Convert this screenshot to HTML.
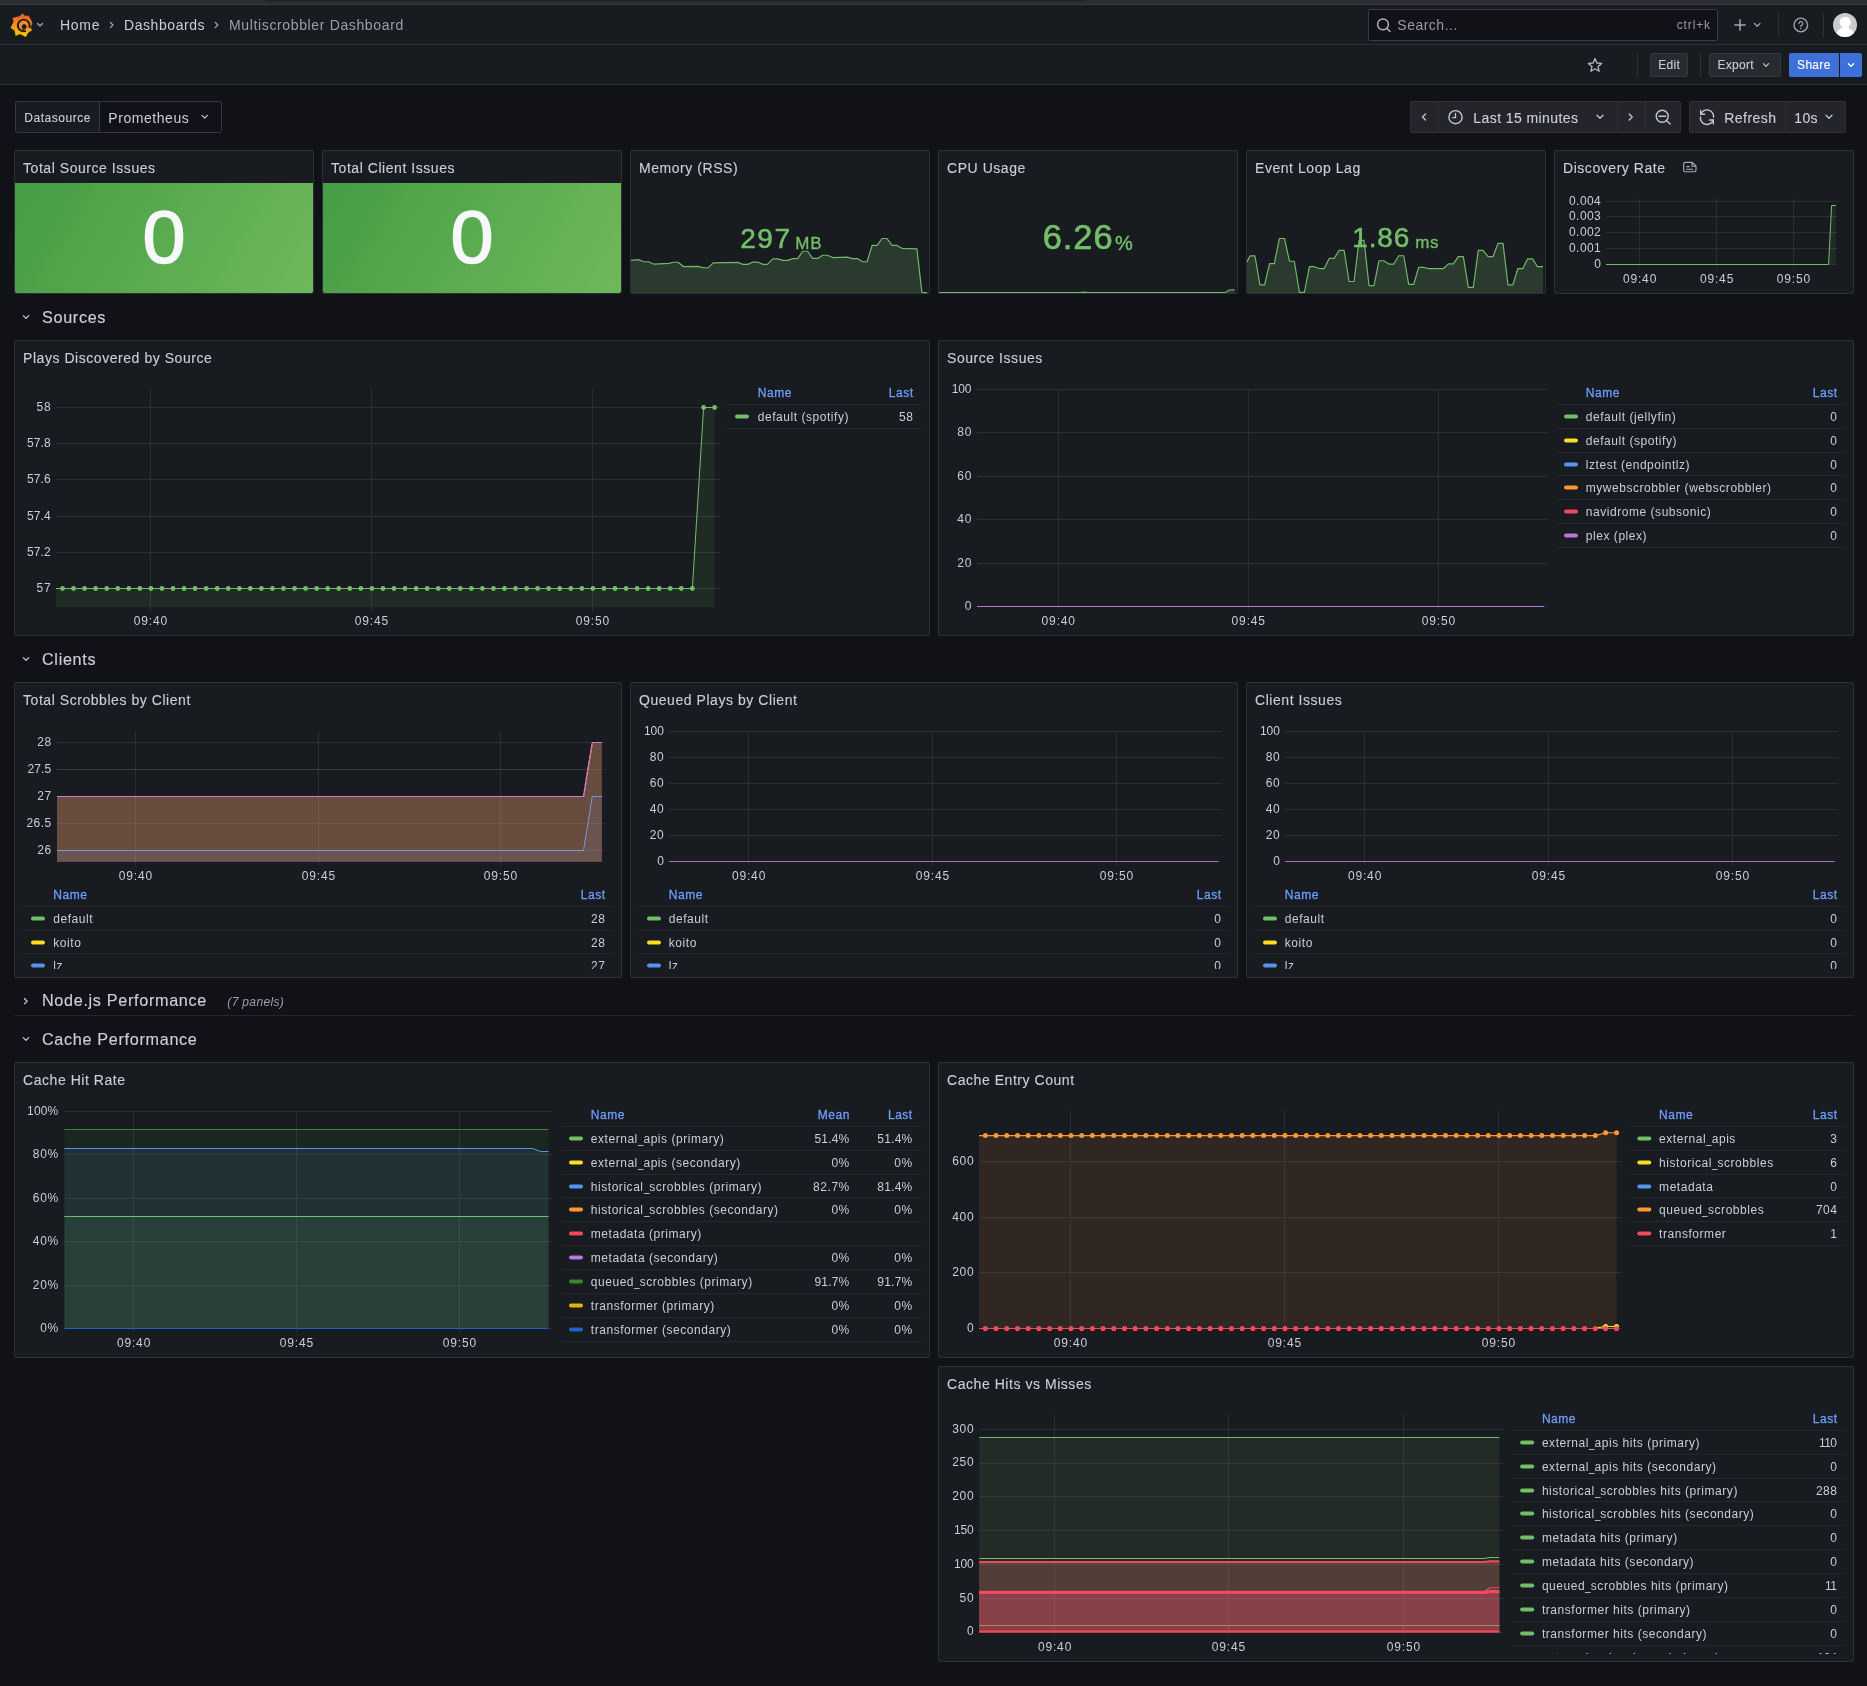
<!DOCTYPE html>
<html lang="en"><head><meta charset="utf-8"><title>Multiscrobbler Dashboard - Dashboards - Grafana</title>
<style>
html,body{margin:0;padding:0;background:#111217;}
body{width:1867px;height:1686px;position:relative;overflow:hidden;font-family:"Liberation Sans",sans-serif;}
.t{position:absolute;white-space:nowrap;}
.b{position:absolute;box-sizing:content-box;}
.u{display:inline-block;width:0.47em;transform:scaleX(0.82);transform-origin:0 50%;letter-spacing:0;}
svg.g{position:absolute;left:0;top:0;}
#txt{position:absolute;left:0;top:0;width:1867px;height:1686px;will-change:transform;}
</style></head><body>
<div class="b" style="left:0px;top:0px;width:1867px;height:4px;background:#2c2b31;"></div>
<div class="b" style="left:267px;top:0px;width:817px;height:1px;background:#202023;"></div>
<div class="b" style="left:0px;top:4px;width:1867px;height:1px;background:#3b3b40;"></div>
<div class="b" style="left:0px;top:5px;width:1867px;height:39px;background:#181b1f;"></div>
<div class="b" style="left:0px;top:44px;width:1867px;height:1px;background:#2d2f35;"></div>
<div class="b" style="left:0px;top:45px;width:1867px;height:39px;background:#181b1f;"></div>
<div class="b" style="left:0px;top:84px;width:1867px;height:1px;background:#2d2f35;"></div>
<div class="b" style="left:1368px;top:9px;width:348px;height:30px;background:#111217;border:1px solid #393b42;border-radius:2px;"></div>
<div class="b" style="left:1650px;top:53px;width:36px;height:22px;background:#292a30;border:1px solid #36383e;border-radius:2px;"></div>
<div class="b" style="left:1709px;top:53px;width:70px;height:22px;background:#292a30;border:1px solid #36383e;border-radius:2px;"></div>
<div class="b" style="left:1789px;top:53px;width:50px;height:24px;background:#3d71d9;border-radius:2px 0 0 2px;"></div>
<div class="b" style="left:1840px;top:53px;width:22px;height:24px;background:#3d71d9;border-radius:0 2px 2px 0;"></div>
<div class="b" style="left:15px;top:101px;width:205px;height:30px;background:#111217;border:1px solid #36373e;border-radius:2px;"></div>
<div class="b" style="left:15px;top:101px;width:83px;height:30px;background:#181b1f;border:1px solid #36373e;border-radius:2px 0 0 2px;"></div>
<div class="b" style="left:1410px;top:101px;width:269px;height:30px;background:#23252b;border:1px solid #2f3137;border-radius:2px;"></div>
<div class="b" style="left:1689px;top:101px;width:155px;height:30px;background:#23252b;border:1px solid #2f3137;border-radius:2px;"></div>
<div class="b" style="left:14px;top:150px;width:298px;height:142px;background:#181b1f;border:1px solid #2d2f35;border-radius:2px;"></div>
<div class="b" style="left:322px;top:150px;width:298px;height:142px;background:#181b1f;border:1px solid #2d2f35;border-radius:2px;"></div>
<div class="b" style="left:630px;top:150px;width:298px;height:142px;background:#181b1f;border:1px solid #2d2f35;border-radius:2px;"></div>
<div class="b" style="left:938px;top:150px;width:298px;height:142px;background:#181b1f;border:1px solid #2d2f35;border-radius:2px;"></div>
<div class="b" style="left:1246px;top:150px;width:298px;height:142px;background:#181b1f;border:1px solid #2d2f35;border-radius:2px;"></div>
<div class="b" style="left:1554px;top:150px;width:298px;height:142px;background:#181b1f;border:1px solid #2d2f35;border-radius:2px;"></div>
<div class="b" style="left:15px;top:183px;width:298px;height:110px;background:linear-gradient(120deg,#459d45,#70b85a);border-radius:0 0 2px 2px;"></div>
<div class="b" style="left:323px;top:183px;width:298px;height:110px;background:linear-gradient(120deg,#459d45,#70b85a);border-radius:0 0 2px 2px;"></div>
<div class="b" style="left:14px;top:340px;width:914px;height:294px;background:#181b1f;border:1px solid #2d2f35;border-radius:2px;"></div>
<div class="b" style="left:938px;top:340px;width:914px;height:294px;background:#181b1f;border:1px solid #2d2f35;border-radius:2px;"></div>
<div class="b" style="left:14px;top:682px;width:606px;height:294px;background:#181b1f;border:1px solid #2d2f35;border-radius:2px;"></div>
<div class="b" style="left:630px;top:682px;width:606px;height:294px;background:#181b1f;border:1px solid #2d2f35;border-radius:2px;"></div>
<div class="b" style="left:1246px;top:682px;width:606px;height:294px;background:#181b1f;border:1px solid #2d2f35;border-radius:2px;"></div>
<div class="b" style="left:14px;top:1062px;width:914px;height:294px;background:#181b1f;border:1px solid #2d2f35;border-radius:2px;"></div>
<div class="b" style="left:938px;top:1062px;width:914px;height:294px;background:#181b1f;border:1px solid #2d2f35;border-radius:2px;"></div>
<div class="b" style="left:938px;top:1366px;width:914px;height:294px;background:#181b1f;border:1px solid #2d2f35;border-radius:2px;"></div>
<svg class="g" width="1867" height="1686" viewBox="0 0 1867 1686">
<defs>
<linearGradient id="lg" x1="0" y1="0" x2="0" y2="1"><stop offset="0" stop-color="#f05a28"/><stop offset="1" stop-color="#fbca0a"/></linearGradient>
</defs>
<g transform="translate(21.6,25.3) scale(0.93) translate(-21.2,-25.1)">
<polygon points="22.20,12.60 24.60,15.10 28.90,15.30 30.10,18.10 31.70,20.60 32.20,23.20 31.70,25.00 30.90,25.60 30.70,28.40 32.20,30.20 27.90,33.10 25.50,37.30 19.60,34.30 14.90,36.00 13.90,30.70 9.60,27.70 12.80,21.60 11.90,17.30 19.00,15.60" fill="url(#lg)" stroke="url(#lg)" stroke-width="0.6" stroke-linejoin="round"/>
<circle cx="23.6" cy="25.4" r="5.4" fill="#f78d1e"/>
<circle cx="23.5" cy="25.3" r="6.3" fill="none" stroke="#181b1f" stroke-width="2.1" stroke-dasharray="2.6 4.6 32.38"/>
<circle cx="24.0" cy="26.7" r="2.6" fill="#181b1f"/>
<path d="M21.2 28.6 Q22.6 30.4 24.6 30.0" fill="none" stroke="#181b1f" stroke-width="0.9"/>
</g>
<polyline points="37.50,23.55 40.00,26.05 42.50,23.55" fill="none" stroke="#a3a4b2" stroke-width="1.3" stroke-linecap="round" stroke-linejoin="round"/>
<polyline points="110.40,22.40 113.00,25.00 110.40,27.60" fill="none" stroke="#a9aab8" stroke-width="1.2" stroke-linecap="round" stroke-linejoin="round"/>
<polyline points="215.20,22.40 217.80,25.00 215.20,27.60" fill="none" stroke="#a9aab8" stroke-width="1.2" stroke-linecap="round" stroke-linejoin="round"/>
<circle cx="1383" cy="24.4" r="5.4" fill="none" stroke="#b4b5c3" stroke-width="1.4"/>
<line x1="1387" y1="28.4" x2="1390" y2="31.4" stroke="#b4b5c3" stroke-width="1.4" stroke-linecap="round"/>
<path d="M1734.3 25 H1745.7 M1740 19.3 V30.7" stroke="#a3a4b2" stroke-width="1.5" fill="none"/>
<polyline points="1754.40,23.40 1757.20,26.20 1760.00,23.40" fill="none" stroke="#a3a4b2" stroke-width="1.3" stroke-linecap="round" stroke-linejoin="round"/>
<rect x="1778.00" y="13.00" width="1" height="24.00" fill="#2f3137"/>
<circle cx="1800.8" cy="25" r="6.8" fill="none" stroke="#a3a4b2" stroke-width="1.3"/>
<path d="M1799.0 23.4 a1.9 1.9 0 1 1 2.8 1.7 q-1 .5 -1 1.4" fill="none" stroke="#a3a4b2" stroke-width="1.2" stroke-linecap="round"/>
<circle cx="1800.8" cy="28.5" r="0.8" fill="#a3a4b2"/>
<rect x="1823.00" y="13.00" width="1" height="24.00" fill="#2f3137"/>
<clipPath id="av"><circle cx="1845" cy="25" r="12"/></clipPath>
<circle cx="1845" cy="25" r="12" fill="#cbcbcb"/>
<g clip-path="url(#av)"><circle cx="1845.2" cy="22.3" r="5.6" fill="#fff"/><ellipse cx="1845.2" cy="36.5" rx="9.2" ry="9.5" fill="#fff"/></g>
<polygon points="1595.00,58.60 1596.88,63.01 1601.66,63.44 1598.04,66.59 1599.11,71.26 1595.00,68.80 1590.89,71.26 1591.96,66.59 1588.34,63.44 1593.12,63.01" fill="none" stroke="#b4b5c3" stroke-width="1.3" stroke-linejoin="round"/>
<rect x="1637.00" y="53.00" width="1" height="24.00" fill="#2f3137"/>
<rect x="1700.00" y="53.00" width="1" height="24.00" fill="#2f3137"/>
<polyline points="1763.40,63.70 1766.00,66.30 1768.60,63.70" fill="none" stroke="#c3c4d2" stroke-width="1.2" stroke-linecap="round" stroke-linejoin="round"/>
<polyline points="1848.40,63.70 1851.00,66.30 1853.60,63.70" fill="none" stroke="#ffffff" stroke-width="1.3" stroke-linecap="round" stroke-linejoin="round"/>
<polyline points="202.00,115.45 204.70,118.15 207.40,115.45" fill="none" stroke="#c3c4d2" stroke-width="1.2" stroke-linecap="round" stroke-linejoin="round"/>
<rect x="1438.00" y="101.00" width="1" height="32.00" fill="#2f3137"/>
<rect x="1617.00" y="101.00" width="1" height="32.00" fill="#2f3137"/>
<rect x="1645.00" y="101.00" width="1" height="32.00" fill="#2f3137"/>
<polyline points="1425.50,114.00 1422.50,117.00 1425.50,120.00" fill="none" stroke="#c3c4d2" stroke-width="1.4" stroke-linecap="round" stroke-linejoin="round"/>
<circle cx="1455.5" cy="117.2" r="6.6" fill="none" stroke="#c3c4d2" stroke-width="1.4"/>
<path d="M1455.5 113.4 V117.6 H1452.6" fill="none" stroke="#c3c4d2" stroke-width="1.3" stroke-linecap="round"/>
<polyline points="1597.00,115.30 1600.00,118.30 1603.00,115.30" fill="none" stroke="#c3c4d2" stroke-width="1.3" stroke-linecap="round" stroke-linejoin="round"/>
<polyline points="1629.20,114.00 1632.20,117.00 1629.20,120.00" fill="none" stroke="#c3c4d2" stroke-width="1.4" stroke-linecap="round" stroke-linejoin="round"/>
<circle cx="1662.2" cy="116.2" r="6.0" fill="none" stroke="#c3c4d2" stroke-width="1.4"/>
<path d="M1658.9 116.3 H1665.5 M1666.7 120.8 L1670.1 124.0" fill="none" stroke="#c3c4d2" stroke-width="1.4" stroke-linecap="round"/>
<rect x="1785.00" y="101.00" width="1" height="32.00" fill="#2f3137"/>
<path d="M1700.9 114.3 A6.5 6.5 0 0 1 1713.5 117.2 M1713.1 120.0 A6.5 6.5 0 0 1 1700.5 117.0" fill="none" stroke="#c3c4d2" stroke-width="1.4" stroke-linecap="round"/>
<path d="M1700.7 110.4 V114.3 H1704.6 M1713.3 123.9 V120.0 H1709.4" fill="none" stroke="#c3c4d2" stroke-width="1.4" stroke-linecap="round" stroke-linejoin="round"/>
<polyline points="1826.00,115.30 1829.00,118.30 1832.00,115.30" fill="none" stroke="#c3c4d2" stroke-width="1.3" stroke-linecap="round" stroke-linejoin="round"/>
<polygon points="631.00,260.40 638.28,259.57 643.26,261.56 648.25,261.73 654.06,264.22 669.00,263.39 673.15,262.23 678.13,262.23 683.45,266.54 698.06,266.38 703.04,267.70 708.02,267.87 713.33,262.89 737.91,262.39 742.89,264.38 747.87,264.38 752.85,262.06 757.83,262.06 762.81,264.38 767.46,264.38 772.78,258.90 777.76,258.90 782.74,260.40 787.72,260.40 792.70,258.57 797.68,258.57 802.66,251.27 807.65,251.27 812.63,258.41 817.61,258.41 822.59,255.25 827.57,255.25 832.55,257.58 847.50,257.08 852.48,258.57 857.46,258.57 862.44,261.73 867.09,261.73 872.07,245.45 877.05,245.45 882.03,238.48 887.01,238.48 891.99,245.45 896.98,245.45 901.96,248.28 916.90,248.78 921.88,292.44 927.20,292.78 927.20,293.00 631.00,293.00" fill="#2a3a2e"/>
<polyline points="631.00,260.40 638.28,259.57 643.26,261.56 648.25,261.73 654.06,264.22 669.00,263.39 673.15,262.23 678.13,262.23 683.45,266.54 698.06,266.38 703.04,267.70 708.02,267.87 713.33,262.89 737.91,262.39 742.89,264.38 747.87,264.38 752.85,262.06 757.83,262.06 762.81,264.38 767.46,264.38 772.78,258.90 777.76,258.90 782.74,260.40 787.72,260.40 792.70,258.57 797.68,258.57 802.66,251.27 807.65,251.27 812.63,258.41 817.61,258.41 822.59,255.25 827.57,255.25 832.55,257.58 847.50,257.08 852.48,258.57 857.46,258.57 862.44,261.73 867.09,261.73 872.07,245.45 877.05,245.45 882.03,238.48 887.01,238.48 891.99,245.45 896.98,245.45 901.96,248.28 916.90,248.78 921.88,292.44 927.20,292.78" fill="none" stroke="#6fb866" stroke-width="1.2" stroke-linejoin="round"/>
<polygon points="939.00,292.50 1080.00,292.50 1084.00,292.20 1090.00,292.50 1225.00,292.50 1229.50,290.00 1234.50,289.80 1234.50,293.00 939.00,293.00" fill="#2a3a2e"/>
<polyline points="939.00,292.50 1080.00,292.50 1084.00,292.20 1090.00,292.50 1225.00,292.50 1229.50,290.00 1234.50,289.80" fill="none" stroke="#6fb866" stroke-width="1.2" stroke-linejoin="round"/>
<polygon points="1246.97,262.06 1249.96,255.92 1254.94,255.92 1259.92,284.81 1264.57,284.81 1269.56,263.55 1274.37,263.55 1279.35,238.48 1284.50,238.48 1289.48,261.23 1294.30,261.23 1299.44,292.44 1304.42,292.44 1309.41,266.71 1314.22,266.71 1319.37,268.53 1324.18,268.53 1329.16,258.41 1334.15,258.41 1339.13,250.44 1344.11,250.44 1349.09,281.49 1354.07,281.49 1359.05,240.47 1364.03,240.47 1369.01,285.64 1374.00,285.64 1378.98,260.73 1383.79,260.73 1388.94,264.05 1393.75,264.05 1398.74,255.75 1403.72,255.75 1408.70,284.47 1413.68,284.47 1418.66,267.37 1423.48,267.37 1428.46,268.53 1443.40,268.53 1448.38,263.89 1453.36,263.89 1458.34,256.58 1463.33,256.58 1468.31,287.46 1473.29,287.46 1478.27,250.44 1483.08,250.44 1488.07,256.58 1493.05,256.58 1498.03,243.30 1503.01,243.30 1507.99,284.97 1512.81,284.97 1517.79,268.70 1522.60,268.70 1527.58,258.90 1532.56,258.90 1537.55,266.71 1543.03,266.71 1543.03,293.00 1246.97,293.00" fill="#2a3a2e"/>
<polyline points="1246.97,262.06 1249.96,255.92 1254.94,255.92 1259.92,284.81 1264.57,284.81 1269.56,263.55 1274.37,263.55 1279.35,238.48 1284.50,238.48 1289.48,261.23 1294.30,261.23 1299.44,292.44 1304.42,292.44 1309.41,266.71 1314.22,266.71 1319.37,268.53 1324.18,268.53 1329.16,258.41 1334.15,258.41 1339.13,250.44 1344.11,250.44 1349.09,281.49 1354.07,281.49 1359.05,240.47 1364.03,240.47 1369.01,285.64 1374.00,285.64 1378.98,260.73 1383.79,260.73 1388.94,264.05 1393.75,264.05 1398.74,255.75 1403.72,255.75 1408.70,284.47 1413.68,284.47 1418.66,267.37 1423.48,267.37 1428.46,268.53 1443.40,268.53 1448.38,263.89 1453.36,263.89 1458.34,256.58 1463.33,256.58 1468.31,287.46 1473.29,287.46 1478.27,250.44 1483.08,250.44 1488.07,256.58 1493.05,256.58 1498.03,243.30 1503.01,243.30 1507.99,284.97 1512.81,284.97 1517.79,268.70 1522.60,268.70 1527.58,258.90 1532.56,258.90 1537.55,266.71 1543.03,266.71" fill="none" stroke="#6fb866" stroke-width="1.2" stroke-linejoin="round"/>
<path d="M1685.2 162.4 H1692.2 L1696.0 166.0 V170.2 Q1696.0 171.7 1694.5 171.7 H1685.2 Q1683.7 171.7 1683.7 170.2 V163.9 Q1683.7 162.4 1685.2 162.4 Z M1692.0 162.6 V166.2 H1695.8 M1686.2 166.6 H1689.6 M1686.2 169.2 H1693.2" fill="none" stroke="#a9aab8" stroke-width="1.15" stroke-linejoin="round"/>
<rect x="1606.00" y="201.00" width="231.60" height="1" fill="#2b2f33"/>
<rect x="1606.00" y="216.00" width="231.60" height="1" fill="#2b2f33"/>
<rect x="1606.00" y="232.00" width="231.60" height="1" fill="#2b2f33"/>
<rect x="1606.00" y="248.00" width="231.60" height="1" fill="#2b2f33"/>
<rect x="1606.00" y="264.00" width="231.60" height="1" fill="#2b2f33"/>
<rect x="1639.00" y="199.00" width="1" height="69.30" fill="#2b2f33"/>
<rect x="1716.00" y="199.00" width="1" height="69.30" fill="#2b2f33"/>
<rect x="1793.00" y="199.00" width="1" height="69.30" fill="#2b2f33"/>
<polygon points="1606.00,264.50 1828.60,264.50 1831.60,205.50 1836.00,205.50 1836.00,264.50 1606.00,264.50" fill="#73bf69" fill-opacity="0.1"/>
<polyline points="1606.00,264.50 1828.60,264.50 1831.60,205.50 1836.00,205.50" fill="none" stroke="#73bf69" stroke-width="1" stroke-linejoin="round"/>
<polyline points="23.30,315.65 26.00,318.35 28.70,315.65" fill="none" stroke="#c3c4d2" stroke-width="1.3" stroke-linecap="round" stroke-linejoin="round"/>
<polyline points="23.30,657.65 26.00,660.35 28.70,657.65" fill="none" stroke="#c3c4d2" stroke-width="1.3" stroke-linecap="round" stroke-linejoin="round"/>
<polyline points="24.45,998.50 27.15,1001.20 24.45,1003.90" fill="none" stroke="#c3c4d2" stroke-width="1.3" stroke-linecap="round" stroke-linejoin="round"/>
<rect x="14.00" y="1015.00" width="1840.00" height="1" fill="#25272d"/>
<polyline points="23.30,1037.65 26.00,1040.35 28.70,1037.65" fill="none" stroke="#c3c4d2" stroke-width="1.3" stroke-linecap="round" stroke-linejoin="round"/>
<rect x="56.00" y="407.00" width="663.70" height="1" fill="#2b2f33"/>
<rect x="56.00" y="443.00" width="663.70" height="1" fill="#2b2f33"/>
<rect x="56.00" y="479.00" width="663.70" height="1" fill="#2b2f33"/>
<rect x="56.00" y="516.00" width="663.70" height="1" fill="#2b2f33"/>
<rect x="56.00" y="552.00" width="663.70" height="1" fill="#2b2f33"/>
<rect x="56.00" y="588.00" width="663.70" height="1" fill="#2b2f33"/>
<rect x="150.00" y="389.30" width="1" height="221.70" fill="#2b2f33"/>
<rect x="371.00" y="389.30" width="1" height="221.70" fill="#2b2f33"/>
<rect x="592.00" y="389.30" width="1" height="221.70" fill="#2b2f33"/>
<polygon points="56.00,588.50 62.50,588.50 73.55,588.50 84.60,588.50 95.65,588.50 106.70,588.50 117.75,588.50 128.80,588.50 139.85,588.50 150.90,588.50 161.95,588.50 173.00,588.50 184.05,588.50 195.10,588.50 206.15,588.50 217.20,588.50 228.25,588.50 239.30,588.50 250.35,588.50 261.40,588.50 272.45,588.50 283.50,588.50 294.55,588.50 305.60,588.50 316.65,588.50 327.70,588.50 338.75,588.50 349.80,588.50 360.85,588.50 371.90,588.50 382.95,588.50 394.00,588.50 405.05,588.50 416.10,588.50 427.15,588.50 438.20,588.50 449.25,588.50 460.30,588.50 471.35,588.50 482.40,588.50 493.45,588.50 504.50,588.50 515.55,588.50 526.60,588.50 537.65,588.50 548.70,588.50 559.75,588.50 570.80,588.50 581.85,588.50 592.90,588.50 603.95,588.50 615.00,588.50 626.05,588.50 637.10,588.50 648.15,588.50 659.20,588.50 670.25,588.50 681.30,588.50 692.35,588.50 703.60,407.50 714.60,407.50 714.60,607.00 56.00,607.00" fill="#73bf69" fill-opacity="0.1"/>
<polyline points="56.00,588.50 62.50,588.50 73.55,588.50 84.60,588.50 95.65,588.50 106.70,588.50 117.75,588.50 128.80,588.50 139.85,588.50 150.90,588.50 161.95,588.50 173.00,588.50 184.05,588.50 195.10,588.50 206.15,588.50 217.20,588.50 228.25,588.50 239.30,588.50 250.35,588.50 261.40,588.50 272.45,588.50 283.50,588.50 294.55,588.50 305.60,588.50 316.65,588.50 327.70,588.50 338.75,588.50 349.80,588.50 360.85,588.50 371.90,588.50 382.95,588.50 394.00,588.50 405.05,588.50 416.10,588.50 427.15,588.50 438.20,588.50 449.25,588.50 460.30,588.50 471.35,588.50 482.40,588.50 493.45,588.50 504.50,588.50 515.55,588.50 526.60,588.50 537.65,588.50 548.70,588.50 559.75,588.50 570.80,588.50 581.85,588.50 592.90,588.50 603.95,588.50 615.00,588.50 626.05,588.50 637.10,588.50 648.15,588.50 659.20,588.50 670.25,588.50 681.30,588.50 692.35,588.50 703.60,407.50 714.60,407.50" fill="none" stroke="#73bf69" stroke-width="1" stroke-linejoin="round"/>
<circle cx="62.50" cy="588.50" r="2.4" fill="#73bf69"/>
<circle cx="73.55" cy="588.50" r="2.4" fill="#73bf69"/>
<circle cx="84.60" cy="588.50" r="2.4" fill="#73bf69"/>
<circle cx="95.65" cy="588.50" r="2.4" fill="#73bf69"/>
<circle cx="106.70" cy="588.50" r="2.4" fill="#73bf69"/>
<circle cx="117.75" cy="588.50" r="2.4" fill="#73bf69"/>
<circle cx="128.80" cy="588.50" r="2.4" fill="#73bf69"/>
<circle cx="139.85" cy="588.50" r="2.4" fill="#73bf69"/>
<circle cx="150.90" cy="588.50" r="2.4" fill="#73bf69"/>
<circle cx="161.95" cy="588.50" r="2.4" fill="#73bf69"/>
<circle cx="173.00" cy="588.50" r="2.4" fill="#73bf69"/>
<circle cx="184.05" cy="588.50" r="2.4" fill="#73bf69"/>
<circle cx="195.10" cy="588.50" r="2.4" fill="#73bf69"/>
<circle cx="206.15" cy="588.50" r="2.4" fill="#73bf69"/>
<circle cx="217.20" cy="588.50" r="2.4" fill="#73bf69"/>
<circle cx="228.25" cy="588.50" r="2.4" fill="#73bf69"/>
<circle cx="239.30" cy="588.50" r="2.4" fill="#73bf69"/>
<circle cx="250.35" cy="588.50" r="2.4" fill="#73bf69"/>
<circle cx="261.40" cy="588.50" r="2.4" fill="#73bf69"/>
<circle cx="272.45" cy="588.50" r="2.4" fill="#73bf69"/>
<circle cx="283.50" cy="588.50" r="2.4" fill="#73bf69"/>
<circle cx="294.55" cy="588.50" r="2.4" fill="#73bf69"/>
<circle cx="305.60" cy="588.50" r="2.4" fill="#73bf69"/>
<circle cx="316.65" cy="588.50" r="2.4" fill="#73bf69"/>
<circle cx="327.70" cy="588.50" r="2.4" fill="#73bf69"/>
<circle cx="338.75" cy="588.50" r="2.4" fill="#73bf69"/>
<circle cx="349.80" cy="588.50" r="2.4" fill="#73bf69"/>
<circle cx="360.85" cy="588.50" r="2.4" fill="#73bf69"/>
<circle cx="371.90" cy="588.50" r="2.4" fill="#73bf69"/>
<circle cx="382.95" cy="588.50" r="2.4" fill="#73bf69"/>
<circle cx="394.00" cy="588.50" r="2.4" fill="#73bf69"/>
<circle cx="405.05" cy="588.50" r="2.4" fill="#73bf69"/>
<circle cx="416.10" cy="588.50" r="2.4" fill="#73bf69"/>
<circle cx="427.15" cy="588.50" r="2.4" fill="#73bf69"/>
<circle cx="438.20" cy="588.50" r="2.4" fill="#73bf69"/>
<circle cx="449.25" cy="588.50" r="2.4" fill="#73bf69"/>
<circle cx="460.30" cy="588.50" r="2.4" fill="#73bf69"/>
<circle cx="471.35" cy="588.50" r="2.4" fill="#73bf69"/>
<circle cx="482.40" cy="588.50" r="2.4" fill="#73bf69"/>
<circle cx="493.45" cy="588.50" r="2.4" fill="#73bf69"/>
<circle cx="504.50" cy="588.50" r="2.4" fill="#73bf69"/>
<circle cx="515.55" cy="588.50" r="2.4" fill="#73bf69"/>
<circle cx="526.60" cy="588.50" r="2.4" fill="#73bf69"/>
<circle cx="537.65" cy="588.50" r="2.4" fill="#73bf69"/>
<circle cx="548.70" cy="588.50" r="2.4" fill="#73bf69"/>
<circle cx="559.75" cy="588.50" r="2.4" fill="#73bf69"/>
<circle cx="570.80" cy="588.50" r="2.4" fill="#73bf69"/>
<circle cx="581.85" cy="588.50" r="2.4" fill="#73bf69"/>
<circle cx="592.90" cy="588.50" r="2.4" fill="#73bf69"/>
<circle cx="603.95" cy="588.50" r="2.4" fill="#73bf69"/>
<circle cx="615.00" cy="588.50" r="2.4" fill="#73bf69"/>
<circle cx="626.05" cy="588.50" r="2.4" fill="#73bf69"/>
<circle cx="637.10" cy="588.50" r="2.4" fill="#73bf69"/>
<circle cx="648.15" cy="588.50" r="2.4" fill="#73bf69"/>
<circle cx="659.20" cy="588.50" r="2.4" fill="#73bf69"/>
<circle cx="670.25" cy="588.50" r="2.4" fill="#73bf69"/>
<circle cx="681.30" cy="588.50" r="2.4" fill="#73bf69"/>
<circle cx="692.35" cy="588.50" r="2.4" fill="#73bf69"/>
<circle cx="703.60" cy="407.50" r="2.4" fill="#73bf69"/>
<circle cx="714.60" cy="407.50" r="2.4" fill="#73bf69"/>
<rect x="727.00" y="404.00" width="194.00" height="1" fill="#25282d"/>
<rect x="735.00" y="414.45" width="14" height="4" rx="2" fill="#73bf69"/>
<rect x="727.00" y="428.00" width="194.00" height="1" fill="#25282d"/>
<rect x="977.00" y="389.00" width="570.70" height="1" fill="#2b2f33"/>
<rect x="977.00" y="432.00" width="570.70" height="1" fill="#2b2f33"/>
<rect x="977.00" y="476.00" width="570.70" height="1" fill="#2b2f33"/>
<rect x="977.00" y="519.00" width="570.70" height="1" fill="#2b2f33"/>
<rect x="977.00" y="563.00" width="570.70" height="1" fill="#2b2f33"/>
<rect x="977.00" y="606.00" width="570.70" height="1" fill="#2b2f33"/>
<rect x="1058.00" y="389.20" width="1" height="221.00" fill="#2b2f33"/>
<rect x="1248.00" y="389.20" width="1" height="221.00" fill="#2b2f33"/>
<rect x="1438.00" y="389.20" width="1" height="221.00" fill="#2b2f33"/>
<rect x="977.00" y="606.00" width="566.80" height="1.0001" fill="#b877d9"/>
<rect x="1556.00" y="404.00" width="289.00" height="1" fill="#25282d"/>
<rect x="1564.00" y="414.45" width="14" height="4" rx="2" fill="#73bf69"/>
<rect x="1556.00" y="428.00" width="289.00" height="1" fill="#25282d"/>
<rect x="1564.00" y="438.45" width="14" height="4" rx="2" fill="#fade2a"/>
<rect x="1556.00" y="452.00" width="289.00" height="1" fill="#25282d"/>
<rect x="1564.00" y="462.45" width="14" height="4" rx="2" fill="#5794f2"/>
<rect x="1556.00" y="475.00" width="289.00" height="1" fill="#25282d"/>
<rect x="1564.00" y="485.45" width="14" height="4" rx="2" fill="#ff9830"/>
<rect x="1556.00" y="499.00" width="289.00" height="1" fill="#25282d"/>
<rect x="1564.00" y="509.45" width="14" height="4" rx="2" fill="#f2495c"/>
<rect x="1556.00" y="523.00" width="289.00" height="1" fill="#25282d"/>
<rect x="1564.00" y="533.45" width="14" height="4" rx="2" fill="#b877d9"/>
<rect x="1556.00" y="547.00" width="289.00" height="1" fill="#25282d"/>
<rect x="57.00" y="742.00" width="548.40" height="1" fill="#2b2f33"/>
<rect x="57.00" y="769.00" width="548.40" height="1" fill="#2b2f33"/>
<rect x="57.00" y="796.00" width="548.40" height="1" fill="#2b2f33"/>
<rect x="57.00" y="823.00" width="548.40" height="1" fill="#2b2f33"/>
<rect x="57.00" y="850.00" width="548.40" height="1" fill="#2b2f33"/>
<rect x="135.00" y="731.20" width="1" height="134.60" fill="#2b2f33"/>
<rect x="318.00" y="731.20" width="1" height="134.60" fill="#2b2f33"/>
<rect x="500.00" y="731.20" width="1" height="134.60" fill="#2b2f33"/>
<polygon points="57.00,796.50 583.50,796.50 592.30,742.50 601.80,742.50 601.80,861.80 57.00,861.80" fill="#684d3f"/>
<polygon points="57.00,850.50 583.50,850.50 592.30,796.50 601.80,796.50 601.80,861.80 57.00,861.80" fill="#6b534e"/>
<rect x="57.00" y="769.00" width="544.80" height="1" fill="#ffffff" fill-opacity="0.07"/>
<rect x="57.00" y="823.00" width="544.80" height="1" fill="#ffffff" fill-opacity="0.07"/>
<rect x="57.00" y="850.00" width="544.80" height="1" fill="#ffffff" fill-opacity="0.07"/>
<rect x="135.00" y="796.50" width="1" height="65.30" fill="#ffffff" fill-opacity="0.07"/>
<rect x="318.00" y="796.50" width="1" height="65.30" fill="#ffffff" fill-opacity="0.07"/>
<rect x="500.00" y="796.50" width="1" height="65.30" fill="#ffffff" fill-opacity="0.07"/>
<polyline points="57.00,850.50 583.50,850.50 592.30,796.50 601.80,796.50" fill="none" stroke="#7b93e0" stroke-width="1" stroke-linejoin="round"/>
<polyline points="583.50,796.50 592.30,742.50" fill="none" stroke="#e27a86" stroke-width="1.3" stroke-linejoin="round"/>
<polyline points="583.50,796.50 592.30,742.50" fill="none" stroke="#c77dd6" stroke-width="1.3" stroke-linejoin="round" stroke-dasharray="3 2.5"/>
<polyline points="57.00,796.50 583.50,796.50" fill="none" stroke="#c77dd6" stroke-width="1" stroke-linejoin="round"/>
<polyline points="592.30,742.50 601.80,742.50" fill="none" stroke="#c77dd6" stroke-width="1" stroke-linejoin="round"/>
<rect x="23.00" y="906.00" width="590.00" height="1" fill="#25282d"/>
<rect x="31.00" y="916.45" width="14" height="4" rx="2" fill="#73bf69"/>
<rect x="23.00" y="930.00" width="590.00" height="1" fill="#25282d"/>
<rect x="31.00" y="940.45" width="14" height="4" rx="2" fill="#fade2a"/>
<rect x="23.00" y="953.00" width="590.00" height="1" fill="#25282d"/>
<rect x="31.00" y="963.45" width="14" height="4" rx="2" fill="#5794f2"/>
<rect x="669.00" y="731.00" width="552.60" height="1" fill="#2b2f33"/>
<rect x="669.00" y="757.00" width="552.60" height="1" fill="#2b2f33"/>
<rect x="669.00" y="783.00" width="552.60" height="1" fill="#2b2f33"/>
<rect x="669.00" y="809.00" width="552.60" height="1" fill="#2b2f33"/>
<rect x="669.00" y="835.00" width="552.60" height="1" fill="#2b2f33"/>
<rect x="669.00" y="861.00" width="552.60" height="1" fill="#2b2f33"/>
<rect x="748.00" y="730.90" width="1" height="134.30" fill="#2b2f33"/>
<rect x="932.00" y="730.90" width="1" height="134.30" fill="#2b2f33"/>
<rect x="1116.00" y="730.90" width="1" height="134.30" fill="#2b2f33"/>
<rect x="669.00" y="861.00" width="549.20" height="1.0001" fill="#a672c8"/>
<rect x="639.00" y="906.00" width="590.00" height="1" fill="#25282d"/>
<rect x="647.00" y="916.45" width="14" height="4" rx="2" fill="#73bf69"/>
<rect x="639.00" y="930.00" width="590.00" height="1" fill="#25282d"/>
<rect x="647.00" y="940.45" width="14" height="4" rx="2" fill="#fade2a"/>
<rect x="639.00" y="953.00" width="590.00" height="1" fill="#25282d"/>
<rect x="647.00" y="963.45" width="14" height="4" rx="2" fill="#5794f2"/>
<rect x="1285.00" y="731.00" width="552.60" height="1" fill="#2b2f33"/>
<rect x="1285.00" y="757.00" width="552.60" height="1" fill="#2b2f33"/>
<rect x="1285.00" y="783.00" width="552.60" height="1" fill="#2b2f33"/>
<rect x="1285.00" y="809.00" width="552.60" height="1" fill="#2b2f33"/>
<rect x="1285.00" y="835.00" width="552.60" height="1" fill="#2b2f33"/>
<rect x="1285.00" y="861.00" width="552.60" height="1" fill="#2b2f33"/>
<rect x="1364.00" y="730.90" width="1" height="134.30" fill="#2b2f33"/>
<rect x="1548.00" y="730.90" width="1" height="134.30" fill="#2b2f33"/>
<rect x="1732.00" y="730.90" width="1" height="134.30" fill="#2b2f33"/>
<rect x="1285.00" y="861.00" width="549.20" height="1.0001" fill="#a672c8"/>
<rect x="1255.00" y="906.00" width="590.00" height="1" fill="#25282d"/>
<rect x="1263.00" y="916.45" width="14" height="4" rx="2" fill="#73bf69"/>
<rect x="1255.00" y="930.00" width="590.00" height="1" fill="#25282d"/>
<rect x="1263.00" y="940.45" width="14" height="4" rx="2" fill="#fade2a"/>
<rect x="1255.00" y="953.00" width="590.00" height="1" fill="#25282d"/>
<rect x="1263.00" y="963.45" width="14" height="4" rx="2" fill="#5794f2"/>
<rect x="64.30" y="1111.00" width="488.00" height="1" fill="#2b2f33"/>
<rect x="64.30" y="1154.00" width="488.00" height="1" fill="#2b2f33"/>
<rect x="64.30" y="1198.00" width="488.00" height="1" fill="#2b2f33"/>
<rect x="64.30" y="1241.00" width="488.00" height="1" fill="#2b2f33"/>
<rect x="64.30" y="1285.00" width="488.00" height="1" fill="#2b2f33"/>
<rect x="64.30" y="1328.00" width="488.00" height="1" fill="#2b2f33"/>
<rect x="133.00" y="1111.20" width="1" height="221.20" fill="#2b2f33"/>
<rect x="296.00" y="1111.20" width="1" height="221.20" fill="#2b2f33"/>
<rect x="459.00" y="1111.20" width="1" height="221.20" fill="#2b2f33"/>
<polygon points="64.30,1129.50 548.60,1129.50 548.60,1328.40 64.30,1328.40" fill="#37872d" fill-opacity="0.1"/>
<polygon points="64.30,1148.50 532.80,1148.50 540.50,1151.50 548.60,1151.50 548.60,1328.40 64.30,1328.40" fill="#5794f2" fill-opacity="0.1"/>
<polygon points="64.30,1216.50 548.60,1216.50 548.60,1328.40 64.30,1328.40" fill="#73bf69" fill-opacity="0.1"/>
<polyline points="64.30,1129.50 548.60,1129.50" fill="none" stroke="#37872d" stroke-width="1" stroke-linejoin="round"/>
<polyline points="64.30,1148.50 532.80,1148.50 540.50,1151.50 548.60,1151.50" fill="none" stroke="#5794f2" stroke-width="1" stroke-linejoin="round"/>
<polyline points="64.30,1216.50 548.60,1216.50" fill="none" stroke="#73bf69" stroke-width="1" stroke-linejoin="round"/>
<polyline points="64.30,1328.50 548.60,1328.50" fill="none" stroke="#1f60c4" stroke-width="1.2" stroke-linejoin="round"/>
<rect x="561.00" y="1126.00" width="360.00" height="1" fill="#25282d"/>
<rect x="569.00" y="1136.45" width="14" height="4" rx="2" fill="#73bf69"/>
<rect x="561.00" y="1150.00" width="360.00" height="1" fill="#25282d"/>
<rect x="569.00" y="1160.45" width="14" height="4" rx="2" fill="#fade2a"/>
<rect x="561.00" y="1174.00" width="360.00" height="1" fill="#25282d"/>
<rect x="569.00" y="1184.45" width="14" height="4" rx="2" fill="#5794f2"/>
<rect x="561.00" y="1197.00" width="360.00" height="1" fill="#25282d"/>
<rect x="569.00" y="1207.45" width="14" height="4" rx="2" fill="#ff9830"/>
<rect x="561.00" y="1221.00" width="360.00" height="1" fill="#25282d"/>
<rect x="569.00" y="1231.45" width="14" height="4" rx="2" fill="#f2495c"/>
<rect x="561.00" y="1245.00" width="360.00" height="1" fill="#25282d"/>
<rect x="569.00" y="1255.45" width="14" height="4" rx="2" fill="#b877d9"/>
<rect x="561.00" y="1269.00" width="360.00" height="1" fill="#25282d"/>
<rect x="569.00" y="1279.45" width="14" height="4" rx="2" fill="#37872d"/>
<rect x="561.00" y="1293.00" width="360.00" height="1" fill="#25282d"/>
<rect x="569.00" y="1303.45" width="14" height="4" rx="2" fill="#e0b400"/>
<rect x="561.00" y="1317.00" width="360.00" height="1" fill="#25282d"/>
<rect x="569.00" y="1327.45" width="14" height="4" rx="2" fill="#1f60c4"/>
<rect x="561.00" y="1341.00" width="360.00" height="1" fill="#25282d"/>
<rect x="979.10" y="1161.00" width="642.50" height="1" fill="#2b2f33"/>
<rect x="979.10" y="1217.00" width="642.50" height="1" fill="#2b2f33"/>
<rect x="979.10" y="1272.00" width="642.50" height="1" fill="#2b2f33"/>
<rect x="979.10" y="1328.00" width="642.50" height="1" fill="#2b2f33"/>
<rect x="1070.00" y="1110.90" width="1" height="221.20" fill="#2b2f33"/>
<rect x="1284.00" y="1110.90" width="1" height="221.20" fill="#2b2f33"/>
<rect x="1498.00" y="1110.90" width="1" height="221.20" fill="#2b2f33"/>
<polygon points="979.10,1135.60 985.40,1135.60 996.10,1135.60 1006.80,1135.60 1017.50,1135.60 1028.20,1135.60 1038.90,1135.60 1049.60,1135.60 1060.30,1135.60 1071.00,1135.60 1081.70,1135.60 1092.40,1135.60 1103.10,1135.60 1113.80,1135.60 1124.50,1135.60 1135.20,1135.60 1145.90,1135.60 1156.60,1135.60 1167.30,1135.60 1178.00,1135.60 1188.70,1135.60 1199.40,1135.60 1210.10,1135.60 1220.80,1135.60 1231.50,1135.60 1242.20,1135.60 1252.90,1135.60 1263.60,1135.60 1274.30,1135.60 1285.00,1135.60 1295.70,1135.60 1306.40,1135.60 1317.10,1135.60 1327.80,1135.60 1338.50,1135.60 1349.20,1135.60 1359.90,1135.60 1370.60,1135.60 1381.30,1135.60 1392.00,1135.60 1402.70,1135.60 1413.40,1135.60 1424.10,1135.60 1434.80,1135.60 1445.50,1135.60 1456.20,1135.60 1466.90,1135.60 1477.60,1135.60 1488.30,1135.60 1499.00,1135.60 1509.70,1135.60 1520.40,1135.60 1531.10,1135.60 1541.80,1135.60 1552.50,1135.60 1563.20,1135.60 1573.90,1135.60 1584.60,1135.60 1595.30,1135.60 1605.60,1132.70 1616.60,1132.70 1616.60,1328.10 979.10,1328.10" fill="#302723"/>
<rect x="979.10" y="1161.00" width="637.50" height="1" fill="#3e3733"/>
<rect x="979.10" y="1217.00" width="637.50" height="1" fill="#3e3733"/>
<rect x="979.10" y="1272.00" width="637.50" height="1" fill="#3e3733"/>
<rect x="1070.00" y="1135.60" width="1" height="192.50" fill="#3e3733"/>
<rect x="1284.00" y="1135.60" width="1" height="192.50" fill="#3e3733"/>
<rect x="1498.00" y="1135.60" width="1" height="192.50" fill="#3e3733"/>
<polyline points="979.10,1135.60 985.40,1135.60 996.10,1135.60 1006.80,1135.60 1017.50,1135.60 1028.20,1135.60 1038.90,1135.60 1049.60,1135.60 1060.30,1135.60 1071.00,1135.60 1081.70,1135.60 1092.40,1135.60 1103.10,1135.60 1113.80,1135.60 1124.50,1135.60 1135.20,1135.60 1145.90,1135.60 1156.60,1135.60 1167.30,1135.60 1178.00,1135.60 1188.70,1135.60 1199.40,1135.60 1210.10,1135.60 1220.80,1135.60 1231.50,1135.60 1242.20,1135.60 1252.90,1135.60 1263.60,1135.60 1274.30,1135.60 1285.00,1135.60 1295.70,1135.60 1306.40,1135.60 1317.10,1135.60 1327.80,1135.60 1338.50,1135.60 1349.20,1135.60 1359.90,1135.60 1370.60,1135.60 1381.30,1135.60 1392.00,1135.60 1402.70,1135.60 1413.40,1135.60 1424.10,1135.60 1434.80,1135.60 1445.50,1135.60 1456.20,1135.60 1466.90,1135.60 1477.60,1135.60 1488.30,1135.60 1499.00,1135.60 1509.70,1135.60 1520.40,1135.60 1531.10,1135.60 1541.80,1135.60 1552.50,1135.60 1563.20,1135.60 1573.90,1135.60 1584.60,1135.60 1595.30,1135.60 1605.60,1132.70 1616.60,1132.70" fill="none" stroke="#ff9830" stroke-width="1.1" stroke-linejoin="round"/>
<circle cx="985.40" cy="1135.60" r="2.5" fill="#ff9830"/>
<circle cx="996.10" cy="1135.60" r="2.5" fill="#ff9830"/>
<circle cx="1006.80" cy="1135.60" r="2.5" fill="#ff9830"/>
<circle cx="1017.50" cy="1135.60" r="2.5" fill="#ff9830"/>
<circle cx="1028.20" cy="1135.60" r="2.5" fill="#ff9830"/>
<circle cx="1038.90" cy="1135.60" r="2.5" fill="#ff9830"/>
<circle cx="1049.60" cy="1135.60" r="2.5" fill="#ff9830"/>
<circle cx="1060.30" cy="1135.60" r="2.5" fill="#ff9830"/>
<circle cx="1071.00" cy="1135.60" r="2.5" fill="#ff9830"/>
<circle cx="1081.70" cy="1135.60" r="2.5" fill="#ff9830"/>
<circle cx="1092.40" cy="1135.60" r="2.5" fill="#ff9830"/>
<circle cx="1103.10" cy="1135.60" r="2.5" fill="#ff9830"/>
<circle cx="1113.80" cy="1135.60" r="2.5" fill="#ff9830"/>
<circle cx="1124.50" cy="1135.60" r="2.5" fill="#ff9830"/>
<circle cx="1135.20" cy="1135.60" r="2.5" fill="#ff9830"/>
<circle cx="1145.90" cy="1135.60" r="2.5" fill="#ff9830"/>
<circle cx="1156.60" cy="1135.60" r="2.5" fill="#ff9830"/>
<circle cx="1167.30" cy="1135.60" r="2.5" fill="#ff9830"/>
<circle cx="1178.00" cy="1135.60" r="2.5" fill="#ff9830"/>
<circle cx="1188.70" cy="1135.60" r="2.5" fill="#ff9830"/>
<circle cx="1199.40" cy="1135.60" r="2.5" fill="#ff9830"/>
<circle cx="1210.10" cy="1135.60" r="2.5" fill="#ff9830"/>
<circle cx="1220.80" cy="1135.60" r="2.5" fill="#ff9830"/>
<circle cx="1231.50" cy="1135.60" r="2.5" fill="#ff9830"/>
<circle cx="1242.20" cy="1135.60" r="2.5" fill="#ff9830"/>
<circle cx="1252.90" cy="1135.60" r="2.5" fill="#ff9830"/>
<circle cx="1263.60" cy="1135.60" r="2.5" fill="#ff9830"/>
<circle cx="1274.30" cy="1135.60" r="2.5" fill="#ff9830"/>
<circle cx="1285.00" cy="1135.60" r="2.5" fill="#ff9830"/>
<circle cx="1295.70" cy="1135.60" r="2.5" fill="#ff9830"/>
<circle cx="1306.40" cy="1135.60" r="2.5" fill="#ff9830"/>
<circle cx="1317.10" cy="1135.60" r="2.5" fill="#ff9830"/>
<circle cx="1327.80" cy="1135.60" r="2.5" fill="#ff9830"/>
<circle cx="1338.50" cy="1135.60" r="2.5" fill="#ff9830"/>
<circle cx="1349.20" cy="1135.60" r="2.5" fill="#ff9830"/>
<circle cx="1359.90" cy="1135.60" r="2.5" fill="#ff9830"/>
<circle cx="1370.60" cy="1135.60" r="2.5" fill="#ff9830"/>
<circle cx="1381.30" cy="1135.60" r="2.5" fill="#ff9830"/>
<circle cx="1392.00" cy="1135.60" r="2.5" fill="#ff9830"/>
<circle cx="1402.70" cy="1135.60" r="2.5" fill="#ff9830"/>
<circle cx="1413.40" cy="1135.60" r="2.5" fill="#ff9830"/>
<circle cx="1424.10" cy="1135.60" r="2.5" fill="#ff9830"/>
<circle cx="1434.80" cy="1135.60" r="2.5" fill="#ff9830"/>
<circle cx="1445.50" cy="1135.60" r="2.5" fill="#ff9830"/>
<circle cx="1456.20" cy="1135.60" r="2.5" fill="#ff9830"/>
<circle cx="1466.90" cy="1135.60" r="2.5" fill="#ff9830"/>
<circle cx="1477.60" cy="1135.60" r="2.5" fill="#ff9830"/>
<circle cx="1488.30" cy="1135.60" r="2.5" fill="#ff9830"/>
<circle cx="1499.00" cy="1135.60" r="2.5" fill="#ff9830"/>
<circle cx="1509.70" cy="1135.60" r="2.5" fill="#ff9830"/>
<circle cx="1520.40" cy="1135.60" r="2.5" fill="#ff9830"/>
<circle cx="1531.10" cy="1135.60" r="2.5" fill="#ff9830"/>
<circle cx="1541.80" cy="1135.60" r="2.5" fill="#ff9830"/>
<circle cx="1552.50" cy="1135.60" r="2.5" fill="#ff9830"/>
<circle cx="1563.20" cy="1135.60" r="2.5" fill="#ff9830"/>
<circle cx="1573.90" cy="1135.60" r="2.5" fill="#ff9830"/>
<circle cx="1584.60" cy="1135.60" r="2.5" fill="#ff9830"/>
<circle cx="1595.30" cy="1135.60" r="2.5" fill="#ff9830"/>
<circle cx="1605.60" cy="1132.70" r="2.5" fill="#ff9830"/>
<circle cx="1616.60" cy="1132.70" r="2.5" fill="#ff9830"/>
<polyline points="1595.00,1328.10 1605.60,1326.50 1616.60,1326.50" fill="none" stroke="#fade2a" stroke-width="1.1" stroke-linejoin="round"/>
<circle cx="1605.60" cy="1326.50" r="2.5" fill="#fade2a"/>
<circle cx="1616.60" cy="1326.50" r="2.5" fill="#fade2a"/>
<polyline points="979.10,1328.50 985.40,1328.50 996.10,1328.50 1006.80,1328.50 1017.50,1328.50 1028.20,1328.50 1038.90,1328.50 1049.60,1328.50 1060.30,1328.50 1071.00,1328.50 1081.70,1328.50 1092.40,1328.50 1103.10,1328.50 1113.80,1328.50 1124.50,1328.50 1135.20,1328.50 1145.90,1328.50 1156.60,1328.50 1167.30,1328.50 1178.00,1328.50 1188.70,1328.50 1199.40,1328.50 1210.10,1328.50 1220.80,1328.50 1231.50,1328.50 1242.20,1328.50 1252.90,1328.50 1263.60,1328.50 1274.30,1328.50 1285.00,1328.50 1295.70,1328.50 1306.40,1328.50 1317.10,1328.50 1327.80,1328.50 1338.50,1328.50 1349.20,1328.50 1359.90,1328.50 1370.60,1328.50 1381.30,1328.50 1392.00,1328.50 1402.70,1328.50 1413.40,1328.50 1424.10,1328.50 1434.80,1328.50 1445.50,1328.50 1456.20,1328.50 1466.90,1328.50 1477.60,1328.50 1488.30,1328.50 1499.00,1328.50 1509.70,1328.50 1520.40,1328.50 1531.10,1328.50 1541.80,1328.50 1552.50,1328.50 1563.20,1328.50 1573.90,1328.50 1584.60,1328.50 1595.30,1328.50 1605.60,1328.50 1616.60,1328.50" fill="none" stroke="#f2495c" stroke-width="1.2" stroke-linejoin="round"/>
<circle cx="985.40" cy="1328.50" r="2.55" fill="#f2495c"/>
<circle cx="996.10" cy="1328.50" r="2.55" fill="#f2495c"/>
<circle cx="1006.80" cy="1328.50" r="2.55" fill="#f2495c"/>
<circle cx="1017.50" cy="1328.50" r="2.55" fill="#f2495c"/>
<circle cx="1028.20" cy="1328.50" r="2.55" fill="#f2495c"/>
<circle cx="1038.90" cy="1328.50" r="2.55" fill="#f2495c"/>
<circle cx="1049.60" cy="1328.50" r="2.55" fill="#f2495c"/>
<circle cx="1060.30" cy="1328.50" r="2.55" fill="#f2495c"/>
<circle cx="1071.00" cy="1328.50" r="2.55" fill="#f2495c"/>
<circle cx="1081.70" cy="1328.50" r="2.55" fill="#f2495c"/>
<circle cx="1092.40" cy="1328.50" r="2.55" fill="#f2495c"/>
<circle cx="1103.10" cy="1328.50" r="2.55" fill="#f2495c"/>
<circle cx="1113.80" cy="1328.50" r="2.55" fill="#f2495c"/>
<circle cx="1124.50" cy="1328.50" r="2.55" fill="#f2495c"/>
<circle cx="1135.20" cy="1328.50" r="2.55" fill="#f2495c"/>
<circle cx="1145.90" cy="1328.50" r="2.55" fill="#f2495c"/>
<circle cx="1156.60" cy="1328.50" r="2.55" fill="#f2495c"/>
<circle cx="1167.30" cy="1328.50" r="2.55" fill="#f2495c"/>
<circle cx="1178.00" cy="1328.50" r="2.55" fill="#f2495c"/>
<circle cx="1188.70" cy="1328.50" r="2.55" fill="#f2495c"/>
<circle cx="1199.40" cy="1328.50" r="2.55" fill="#f2495c"/>
<circle cx="1210.10" cy="1328.50" r="2.55" fill="#f2495c"/>
<circle cx="1220.80" cy="1328.50" r="2.55" fill="#f2495c"/>
<circle cx="1231.50" cy="1328.50" r="2.55" fill="#f2495c"/>
<circle cx="1242.20" cy="1328.50" r="2.55" fill="#f2495c"/>
<circle cx="1252.90" cy="1328.50" r="2.55" fill="#f2495c"/>
<circle cx="1263.60" cy="1328.50" r="2.55" fill="#f2495c"/>
<circle cx="1274.30" cy="1328.50" r="2.55" fill="#f2495c"/>
<circle cx="1285.00" cy="1328.50" r="2.55" fill="#f2495c"/>
<circle cx="1295.70" cy="1328.50" r="2.55" fill="#f2495c"/>
<circle cx="1306.40" cy="1328.50" r="2.55" fill="#f2495c"/>
<circle cx="1317.10" cy="1328.50" r="2.55" fill="#f2495c"/>
<circle cx="1327.80" cy="1328.50" r="2.55" fill="#f2495c"/>
<circle cx="1338.50" cy="1328.50" r="2.55" fill="#f2495c"/>
<circle cx="1349.20" cy="1328.50" r="2.55" fill="#f2495c"/>
<circle cx="1359.90" cy="1328.50" r="2.55" fill="#f2495c"/>
<circle cx="1370.60" cy="1328.50" r="2.55" fill="#f2495c"/>
<circle cx="1381.30" cy="1328.50" r="2.55" fill="#f2495c"/>
<circle cx="1392.00" cy="1328.50" r="2.55" fill="#f2495c"/>
<circle cx="1402.70" cy="1328.50" r="2.55" fill="#f2495c"/>
<circle cx="1413.40" cy="1328.50" r="2.55" fill="#f2495c"/>
<circle cx="1424.10" cy="1328.50" r="2.55" fill="#f2495c"/>
<circle cx="1434.80" cy="1328.50" r="2.55" fill="#f2495c"/>
<circle cx="1445.50" cy="1328.50" r="2.55" fill="#f2495c"/>
<circle cx="1456.20" cy="1328.50" r="2.55" fill="#f2495c"/>
<circle cx="1466.90" cy="1328.50" r="2.55" fill="#f2495c"/>
<circle cx="1477.60" cy="1328.50" r="2.55" fill="#f2495c"/>
<circle cx="1488.30" cy="1328.50" r="2.55" fill="#f2495c"/>
<circle cx="1499.00" cy="1328.50" r="2.55" fill="#f2495c"/>
<circle cx="1509.70" cy="1328.50" r="2.55" fill="#f2495c"/>
<circle cx="1520.40" cy="1328.50" r="2.55" fill="#f2495c"/>
<circle cx="1531.10" cy="1328.50" r="2.55" fill="#f2495c"/>
<circle cx="1541.80" cy="1328.50" r="2.55" fill="#f2495c"/>
<circle cx="1552.50" cy="1328.50" r="2.55" fill="#f2495c"/>
<circle cx="1563.20" cy="1328.50" r="2.55" fill="#f2495c"/>
<circle cx="1573.90" cy="1328.50" r="2.55" fill="#f2495c"/>
<circle cx="1584.60" cy="1328.50" r="2.55" fill="#f2495c"/>
<circle cx="1595.30" cy="1328.50" r="2.55" fill="#f2495c"/>
<circle cx="1605.60" cy="1328.50" r="2.55" fill="#f2495c"/>
<circle cx="1616.60" cy="1328.50" r="2.55" fill="#f2495c"/>
<rect x="1629.30" y="1126.00" width="215.70" height="1" fill="#25282d"/>
<rect x="1637.30" y="1136.45" width="14" height="4" rx="2" fill="#73bf69"/>
<rect x="1629.30" y="1150.00" width="215.70" height="1" fill="#25282d"/>
<rect x="1637.30" y="1160.45" width="14" height="4" rx="2" fill="#fade2a"/>
<rect x="1629.30" y="1174.00" width="215.70" height="1" fill="#25282d"/>
<rect x="1637.30" y="1184.45" width="14" height="4" rx="2" fill="#5794f2"/>
<rect x="1629.30" y="1197.00" width="215.70" height="1" fill="#25282d"/>
<rect x="1637.30" y="1207.45" width="14" height="4" rx="2" fill="#ff9830"/>
<rect x="1629.30" y="1221.00" width="215.70" height="1" fill="#25282d"/>
<rect x="1637.30" y="1231.45" width="14" height="4" rx="2" fill="#f2495c"/>
<rect x="1629.30" y="1245.00" width="215.70" height="1" fill="#25282d"/>
<rect x="979.10" y="1429.00" width="524.10" height="1" fill="#2b2f33"/>
<rect x="979.10" y="1463.00" width="524.10" height="1" fill="#2b2f33"/>
<rect x="979.10" y="1496.00" width="524.10" height="1" fill="#2b2f33"/>
<rect x="979.10" y="1530.00" width="524.10" height="1" fill="#2b2f33"/>
<rect x="979.10" y="1564.00" width="524.10" height="1" fill="#2b2f33"/>
<rect x="979.10" y="1598.00" width="524.10" height="1" fill="#2b2f33"/>
<rect x="979.10" y="1632.00" width="524.10" height="1" fill="#2b2f33"/>
<rect x="1054.00" y="1415.00" width="1" height="220.80" fill="#2b2f33"/>
<rect x="1228.00" y="1415.00" width="1" height="220.80" fill="#2b2f33"/>
<rect x="1403.00" y="1415.00" width="1" height="220.80" fill="#2b2f33"/>
<polygon points="979.10,1437.50 1499.40,1437.50 1499.40,1631.80 979.10,1631.80" fill="#232b27"/>
<polygon points="979.10,1562.00 1484.00,1562.00 1490.00,1561.30 1499.40,1561.30 1499.40,1631.80 979.10,1631.80" fill="#523e38"/>
<polygon points="979.10,1592.40 1484.00,1592.40 1490.00,1591.60 1499.40,1591.60 1499.40,1631.80 979.10,1631.80" fill="#884148"/>
<rect x="979.10" y="1463.00" width="520.30" height="1" fill="#333a37"/>
<rect x="979.10" y="1496.00" width="520.30" height="1" fill="#333a37"/>
<rect x="979.10" y="1530.00" width="520.30" height="1" fill="#333a37"/>
<rect x="979.10" y="1564.00" width="520.30" height="1" fill="#5e4c47"/>
<rect x="979.10" y="1598.00" width="520.30" height="1" fill="#8f4e55"/>
<rect x="1054.00" y="1437.50" width="1" height="120.50" fill="#333a37"/>
<rect x="1054.00" y="1562.00" width="1" height="30.00" fill="#5e4c47"/>
<rect x="1054.00" y="1592.00" width="1" height="39.80" fill="#8f4e55"/>
<rect x="1228.00" y="1437.50" width="1" height="120.50" fill="#333a37"/>
<rect x="1228.00" y="1562.00" width="1" height="30.00" fill="#5e4c47"/>
<rect x="1228.00" y="1592.00" width="1" height="39.80" fill="#8f4e55"/>
<rect x="1403.00" y="1437.50" width="1" height="120.50" fill="#333a37"/>
<rect x="1403.00" y="1562.00" width="1" height="30.00" fill="#5e4c47"/>
<rect x="1403.00" y="1592.00" width="1" height="39.80" fill="#8f4e55"/>
<polyline points="979.10,1437.50 1499.40,1437.50" fill="none" stroke="#73bf69" stroke-width="1" stroke-linejoin="round"/>
<polyline points="979.10,1558.50 1484.00,1558.50 1490.00,1557.50 1499.40,1557.50" fill="none" stroke="#73bf69" stroke-width="1" stroke-linejoin="round"/>
<polyline points="979.10,1562.00 1484.00,1562.00 1490.00,1561.30 1499.40,1561.30" fill="none" stroke="#f2495c" stroke-width="2.2" stroke-linejoin="round"/>
<polyline points="1484.00,1592.00 1490.00,1587.80 1499.40,1587.80" fill="none" stroke="#f2495c" stroke-width="1.1" stroke-linejoin="round"/>
<polyline points="979.10,1592.40 1484.00,1592.40 1490.00,1591.60 1499.40,1591.60" fill="none" stroke="#f2495c" stroke-width="3.2" stroke-linejoin="round"/>
<polyline points="979.10,1625.50 1499.40,1625.50" fill="none" stroke="#b08a50" stroke-width="1.0" stroke-linejoin="round"/>
<polyline points="979.10,1631.60 1499.40,1631.60" fill="none" stroke="#f2495c" stroke-width="2.4" stroke-linejoin="round"/>
<rect x="1512.10" y="1430.00" width="332.90" height="1" fill="#25282d"/>
<rect x="1520.10" y="1440.45" width="14" height="4" rx="2" fill="#73bf69"/>
<rect x="1512.10" y="1454.00" width="332.90" height="1" fill="#25282d"/>
<rect x="1520.10" y="1464.45" width="14" height="4" rx="2" fill="#73bf69"/>
<rect x="1512.10" y="1478.00" width="332.90" height="1" fill="#25282d"/>
<rect x="1520.10" y="1488.45" width="14" height="4" rx="2" fill="#73bf69"/>
<rect x="1512.10" y="1501.00" width="332.90" height="1" fill="#25282d"/>
<rect x="1520.10" y="1511.45" width="14" height="4" rx="2" fill="#73bf69"/>
<rect x="1512.10" y="1525.00" width="332.90" height="1" fill="#25282d"/>
<rect x="1520.10" y="1535.45" width="14" height="4" rx="2" fill="#73bf69"/>
<rect x="1512.10" y="1549.00" width="332.90" height="1" fill="#25282d"/>
<rect x="1520.10" y="1559.45" width="14" height="4" rx="2" fill="#73bf69"/>
<rect x="1512.10" y="1573.00" width="332.90" height="1" fill="#25282d"/>
<rect x="1520.10" y="1583.45" width="14" height="4" rx="2" fill="#73bf69"/>
<rect x="1512.10" y="1597.00" width="332.90" height="1" fill="#25282d"/>
<rect x="1520.10" y="1607.45" width="14" height="4" rx="2" fill="#73bf69"/>
<rect x="1512.10" y="1621.00" width="332.90" height="1" fill="#25282d"/>
<rect x="1520.10" y="1631.45" width="14" height="4" rx="2" fill="#73bf69"/>
<rect x="1512.10" y="1645.00" width="332.90" height="1" fill="#25282d"/>
</svg>
<div id="txt">
<div class="t" style="top:14.50px;font-size:14px;line-height:21px;color:#ccccdc;letter-spacing:0.7px;left:60.00px;">Home</div>
<div class="t" style="top:14.50px;font-size:14px;line-height:21px;color:#ccccdc;letter-spacing:0.57px;left:124.00px;">Dashboards</div>
<div class="t" style="top:14.50px;font-size:14px;line-height:21px;color:#9d9eac;letter-spacing:0.64px;left:229.00px;">Multiscrobbler Dashboard</div>
<div class="t" style="top:14.50px;font-size:14px;line-height:21px;color:#9899a6;letter-spacing:0.5px;left:1397.30px;">Search...</div>
<div class="t" style="top:16.00px;font-size:12px;line-height:18px;color:#9899a6;letter-spacing:0.85px;right:156.15px;">ctrl+k</div>
<div class="t" style="top:56.00px;font-size:12px;line-height:18px;color:#ccccdc;-webkit-text-stroke:0.11px #ccccdc;letter-spacing:0.3px;left:1469.15px;width:400px;text-align:center;">Edit</div>
<div class="t" style="top:56.00px;font-size:12px;line-height:18px;color:#ccccdc;-webkit-text-stroke:0.11px #ccccdc;letter-spacing:0.3px;left:1717.50px;">Export</div>
<div class="t" style="top:56.00px;font-size:12px;line-height:18px;color:#ffffff;-webkit-text-stroke:0.11px #ffffff;letter-spacing:0.3px;left:1613.85px;width:400px;text-align:center;">Share</div>
<div class="t" style="top:108.80px;font-size:12px;line-height:18px;color:#ccccdc;-webkit-text-stroke:0.11px #ccccdc;letter-spacing:0.55px;left:24.20px;">Datasource</div>
<div class="t" style="top:107.50px;font-size:14px;line-height:21px;color:#ccccdc;letter-spacing:0.55px;left:108.30px;">Prometheus</div>
<div class="t" style="top:107.50px;font-size:14px;line-height:21px;color:#ccccdc;-webkit-text-stroke:0.13px #ccccdc;letter-spacing:0.42px;left:1473.30px;">Last 15 minutes</div>
<div class="t" style="top:107.50px;font-size:14px;line-height:21px;color:#ccccdc;-webkit-text-stroke:0.13px #ccccdc;letter-spacing:0.45px;left:1724.30px;">Refresh</div>
<div class="t" style="top:107.50px;font-size:14px;line-height:21px;color:#ccccdc;-webkit-text-stroke:0.13px #ccccdc;letter-spacing:0.3px;left:1794.30px;">10s</div>
<div class="t" style="top:157.50px;font-size:14px;line-height:21px;color:#ccccdc;-webkit-text-stroke:0.13px #ccccdc;letter-spacing:0.55px;left:23.00px;">Total Source Issues</div>
<div class="t" style="top:157.50px;font-size:14px;line-height:21px;color:#ccccdc;-webkit-text-stroke:0.13px #ccccdc;letter-spacing:0.55px;left:331.00px;">Total Client Issues</div>
<div class="t" style="top:157.50px;font-size:14px;line-height:21px;color:#ccccdc;-webkit-text-stroke:0.13px #ccccdc;letter-spacing:0.55px;left:639.00px;">Memory (RSS)</div>
<div class="t" style="top:157.50px;font-size:14px;line-height:21px;color:#ccccdc;-webkit-text-stroke:0.13px #ccccdc;letter-spacing:0.55px;left:947.00px;">CPU Usage</div>
<div class="t" style="top:157.50px;font-size:14px;line-height:21px;color:#ccccdc;-webkit-text-stroke:0.13px #ccccdc;letter-spacing:0.55px;left:1255.00px;">Event Loop Lag</div>
<div class="t" style="top:157.50px;font-size:14px;line-height:21px;color:#ccccdc;-webkit-text-stroke:0.13px #ccccdc;letter-spacing:0.55px;left:1563.00px;">Discovery Rate</div>
<div class="t" style="top:197.60px;font-size:74.5px;line-height:80px;color:#f7f8fa;-webkit-text-stroke:1.42px #f7f8fa;left:-36.00px;width:400px;text-align:center;transform:scaleX(1.04);">0</div>
<div class="t" style="top:197.60px;font-size:74.5px;line-height:80px;color:#f7f8fa;-webkit-text-stroke:1.42px #f7f8fa;left:272.00px;width:400px;text-align:center;transform:scaleX(1.04);">0</div>
<div class="t" style="top:222.00px;font-size:28px;line-height:34px;color:#73bf69;-webkit-text-stroke:0.53px #73bf69;letter-spacing:1.5px;right:1075.50px;">297</div>
<div class="t" style="top:233.20px;font-size:17px;line-height:22px;color:#73bf69;-webkit-text-stroke:0.32px #73bf69;letter-spacing:0.8px;left:795.20px;">MB</div>
<div class="t" style="top:217.00px;font-size:34.5px;line-height:40px;color:#73bf69;-webkit-text-stroke:0.66px #73bf69;letter-spacing:0.9px;right:753.50px;">6.26</div>
<div class="t" style="top:231.40px;font-size:20px;line-height:24px;color:#73bf69;-webkit-text-stroke:0.38px #73bf69;left:1115.00px;">%</div>
<div class="t" style="top:221.20px;font-size:28px;line-height:34px;color:#73bf69;-webkit-text-stroke:0.53px #73bf69;letter-spacing:0.9px;right:456.70px;">1.86</div>
<div class="t" style="top:232.40px;font-size:17px;line-height:22px;color:#73bf69;-webkit-text-stroke:0.32px #73bf69;letter-spacing:0.7px;left:1415.20px;">ms</div>
<div class="t" style="top:191.60px;font-size:12px;line-height:18px;color:#ccccdc;letter-spacing:0.45px;right:265.75px;">0.004</div>
<div class="t" style="top:207.20px;font-size:12px;line-height:18px;color:#ccccdc;letter-spacing:0.45px;right:265.75px;">0.003</div>
<div class="t" style="top:223.10px;font-size:12px;line-height:18px;color:#ccccdc;letter-spacing:0.45px;right:265.75px;">0.002</div>
<div class="t" style="top:239.00px;font-size:12px;line-height:18px;color:#ccccdc;letter-spacing:0.45px;right:265.75px;">0.001</div>
<div class="t" style="top:254.90px;font-size:12px;line-height:18px;color:#ccccdc;letter-spacing:0.7px;right:265.50px;">0</div>
<div class="t" style="top:270.00px;font-size:12px;line-height:18px;color:#ccccdc;letter-spacing:0.85px;left:1440.02px;width:400px;text-align:center;">09:40</div>
<div class="t" style="top:270.00px;font-size:12px;line-height:18px;color:#ccccdc;letter-spacing:0.85px;left:1517.02px;width:400px;text-align:center;">09:45</div>
<div class="t" style="top:270.00px;font-size:12px;line-height:18px;color:#ccccdc;letter-spacing:0.85px;left:1593.92px;width:400px;text-align:center;">09:50</div>
<div class="t" style="top:304.70px;font-size:16.2px;line-height:24px;color:#ccccdc;-webkit-text-stroke:0.15px #ccccdc;letter-spacing:0.68px;left:42.00px;">Sources</div>
<div class="t" style="top:646.70px;font-size:16.2px;line-height:24px;color:#ccccdc;-webkit-text-stroke:0.15px #ccccdc;letter-spacing:0.68px;left:42.00px;">Clients</div>
<div class="t" style="top:988.00px;font-size:16.2px;line-height:24px;color:#ccccdc;-webkit-text-stroke:0.15px #ccccdc;letter-spacing:0.68px;left:42.00px;">Node.js Performance</div>
<div class="t" style="top:992.70px;font-size:12px;line-height:18px;color:#9d9eac;letter-spacing:0.35px;left:227.30px;font-style:italic;">(7 panels)</div>
<div class="t" style="top:1026.70px;font-size:16.2px;line-height:24px;color:#ccccdc;-webkit-text-stroke:0.15px #ccccdc;letter-spacing:0.68px;left:42.00px;">Cache Performance</div>
<div class="t" style="top:347.50px;font-size:14px;line-height:21px;color:#ccccdc;-webkit-text-stroke:0.13px #ccccdc;letter-spacing:0.55px;left:23.00px;">Plays Discovered by Source</div>
<div class="t" style="top:398.00px;font-size:12px;line-height:18px;color:#ccccdc;letter-spacing:0.7px;right:1815.70px;">58</div>
<div class="t" style="top:434.00px;font-size:12px;line-height:18px;color:#ccccdc;letter-spacing:0.1px;right:1816.30px;">57.8</div>
<div class="t" style="top:470.00px;font-size:12px;line-height:18px;color:#ccccdc;letter-spacing:0.1px;right:1816.30px;">57.6</div>
<div class="t" style="top:506.60px;font-size:12px;line-height:18px;color:#ccccdc;letter-spacing:0.1px;right:1816.30px;">57.4</div>
<div class="t" style="top:542.70px;font-size:12px;line-height:18px;color:#ccccdc;letter-spacing:0.1px;right:1816.30px;">57.2</div>
<div class="t" style="top:578.90px;font-size:12px;line-height:18px;color:#ccccdc;letter-spacing:0.7px;right:1815.70px;">57</div>
<div class="t" style="top:612.00px;font-size:12px;line-height:18px;color:#ccccdc;letter-spacing:0.85px;left:-49.17px;width:400px;text-align:center;">09:40</div>
<div class="t" style="top:612.00px;font-size:12px;line-height:18px;color:#ccccdc;letter-spacing:0.85px;left:171.93px;width:400px;text-align:center;">09:45</div>
<div class="t" style="top:612.00px;font-size:12px;line-height:18px;color:#ccccdc;letter-spacing:0.85px;left:392.92px;width:400px;text-align:center;">09:50</div>
<div class="t" style="top:383.60px;font-size:12px;line-height:18px;color:#6e9fff;-webkit-text-stroke:0.11px #6e9fff;letter-spacing:0.5px;left:757.80px;-webkit-text-stroke:0.28px #6e9fff;">Name</div>
<div class="t" style="top:383.60px;font-size:12px;line-height:18px;color:#6e9fff;-webkit-text-stroke:0.11px #6e9fff;letter-spacing:0.5px;right:953.50px;-webkit-text-stroke:0.28px #6e9fff;">Last</div>
<div class="t" style="top:407.65px;font-size:12px;line-height:18px;color:#ccccdc;letter-spacing:0.54px;left:757.80px;">default (spotify)</div>
<div class="t" style="top:407.65px;font-size:12px;line-height:18px;color:#ccccdc;letter-spacing:0.54px;right:953.46px;">58</div>
<div class="t" style="top:347.50px;font-size:14px;line-height:21px;color:#ccccdc;-webkit-text-stroke:0.13px #ccccdc;letter-spacing:0.55px;left:947.00px;">Source Issues</div>
<div class="t" style="top:379.80px;font-size:12px;line-height:18px;color:#ccccdc;letter-spacing:-0.15000000000000002px;right:895.75px;">100</div>
<div class="t" style="top:423.00px;font-size:12px;line-height:18px;color:#ccccdc;letter-spacing:0.7px;right:894.90px;">80</div>
<div class="t" style="top:466.60px;font-size:12px;line-height:18px;color:#ccccdc;letter-spacing:0.7px;right:894.90px;">60</div>
<div class="t" style="top:510.00px;font-size:12px;line-height:18px;color:#ccccdc;letter-spacing:0.7px;right:894.90px;">40</div>
<div class="t" style="top:553.50px;font-size:12px;line-height:18px;color:#ccccdc;letter-spacing:0.7px;right:894.90px;">20</div>
<div class="t" style="top:596.80px;font-size:12px;line-height:18px;color:#ccccdc;letter-spacing:0.7px;right:894.90px;">0</div>
<div class="t" style="top:611.50px;font-size:12px;line-height:18px;color:#ccccdc;letter-spacing:0.85px;left:858.72px;width:400px;text-align:center;">09:40</div>
<div class="t" style="top:611.50px;font-size:12px;line-height:18px;color:#ccccdc;letter-spacing:0.85px;left:1048.72px;width:400px;text-align:center;">09:45</div>
<div class="t" style="top:611.50px;font-size:12px;line-height:18px;color:#ccccdc;letter-spacing:0.85px;left:1238.83px;width:400px;text-align:center;">09:50</div>
<div class="t" style="top:383.60px;font-size:12px;line-height:18px;color:#6e9fff;-webkit-text-stroke:0.11px #6e9fff;letter-spacing:0.5px;left:1585.80px;-webkit-text-stroke:0.28px #6e9fff;">Name</div>
<div class="t" style="top:383.60px;font-size:12px;line-height:18px;color:#6e9fff;-webkit-text-stroke:0.11px #6e9fff;letter-spacing:0.5px;right:29.50px;-webkit-text-stroke:0.28px #6e9fff;">Last</div>
<div class="t" style="top:407.65px;font-size:12px;line-height:18px;color:#ccccdc;letter-spacing:0.54px;left:1585.80px;">default (jellyfin)</div>
<div class="t" style="top:407.65px;font-size:12px;line-height:18px;color:#ccccdc;letter-spacing:0.54px;right:29.46px;">0</div>
<div class="t" style="top:431.65px;font-size:12px;line-height:18px;color:#ccccdc;letter-spacing:0.54px;left:1585.80px;">default (spotify)</div>
<div class="t" style="top:431.65px;font-size:12px;line-height:18px;color:#ccccdc;letter-spacing:0.54px;right:29.46px;">0</div>
<div class="t" style="top:455.65px;font-size:12px;line-height:18px;color:#ccccdc;letter-spacing:0.54px;left:1585.80px;">lztest (endpointlz)</div>
<div class="t" style="top:455.65px;font-size:12px;line-height:18px;color:#ccccdc;letter-spacing:0.54px;right:29.46px;">0</div>
<div class="t" style="top:478.65px;font-size:12px;line-height:18px;color:#ccccdc;letter-spacing:0.54px;left:1585.80px;">mywebscrobbler (webscrobbler)</div>
<div class="t" style="top:478.65px;font-size:12px;line-height:18px;color:#ccccdc;letter-spacing:0.54px;right:29.46px;">0</div>
<div class="t" style="top:502.65px;font-size:12px;line-height:18px;color:#ccccdc;letter-spacing:0.54px;left:1585.80px;">navidrome (subsonic)</div>
<div class="t" style="top:502.65px;font-size:12px;line-height:18px;color:#ccccdc;letter-spacing:0.54px;right:29.46px;">0</div>
<div class="t" style="top:526.65px;font-size:12px;line-height:18px;color:#ccccdc;letter-spacing:0.54px;left:1585.80px;">plex (plex)</div>
<div class="t" style="top:526.65px;font-size:12px;line-height:18px;color:#ccccdc;letter-spacing:0.54px;right:29.46px;">0</div>
<div class="t" style="top:689.50px;font-size:14px;line-height:21px;color:#ccccdc;-webkit-text-stroke:0.13px #ccccdc;letter-spacing:0.55px;left:23.00px;">Total Scrobbles by Client</div>
<div class="t" style="top:733.00px;font-size:12px;line-height:18px;color:#ccccdc;letter-spacing:0.7px;right:1815.10px;">28</div>
<div class="t" style="top:760.00px;font-size:12px;line-height:18px;color:#ccccdc;letter-spacing:0.1px;right:1815.70px;">27.5</div>
<div class="t" style="top:787.10px;font-size:12px;line-height:18px;color:#ccccdc;letter-spacing:0.7px;right:1815.10px;">27</div>
<div class="t" style="top:814.00px;font-size:12px;line-height:18px;color:#ccccdc;letter-spacing:0.45px;right:1815.35px;">26.5</div>
<div class="t" style="top:841.00px;font-size:12px;line-height:18px;color:#ccccdc;letter-spacing:0.7px;right:1815.10px;">26</div>
<div class="t" style="top:866.50px;font-size:12px;line-height:18px;color:#ccccdc;letter-spacing:0.85px;left:-64.17px;width:400px;text-align:center;">09:40</div>
<div class="t" style="top:866.50px;font-size:12px;line-height:18px;color:#ccccdc;letter-spacing:0.85px;left:118.93px;width:400px;text-align:center;">09:45</div>
<div class="t" style="top:866.50px;font-size:12px;line-height:18px;color:#ccccdc;letter-spacing:0.85px;left:300.93px;width:400px;text-align:center;">09:50</div>
<div class="t" style="top:885.60px;font-size:12px;line-height:18px;color:#6e9fff;-webkit-text-stroke:0.11px #6e9fff;letter-spacing:0.5px;left:53.30px;-webkit-text-stroke:0.28px #6e9fff;">Name</div>
<div class="t" style="top:885.60px;font-size:12px;line-height:18px;color:#6e9fff;-webkit-text-stroke:0.11px #6e9fff;letter-spacing:0.5px;right:1261.50px;-webkit-text-stroke:0.28px #6e9fff;">Last</div>
<div class="t" style="top:909.65px;font-size:12px;line-height:18px;color:#ccccdc;letter-spacing:0.54px;left:53.30px;">default</div>
<div class="t" style="top:909.65px;font-size:12px;line-height:18px;color:#ccccdc;letter-spacing:0.54px;right:1261.46px;">28</div>
<div class="t" style="top:933.65px;font-size:12px;line-height:18px;color:#ccccdc;letter-spacing:0.54px;left:53.30px;">koito</div>
<div class="t" style="top:933.65px;font-size:12px;line-height:18px;color:#ccccdc;letter-spacing:0.54px;right:1261.46px;">28</div>
<div class="t" style="top:956.65px;font-size:12px;line-height:18px;color:#ccccdc;letter-spacing:0.54px;left:53.30px;height:12.35px;overflow:hidden;">lz</div>
<div class="t" style="top:956.65px;font-size:12px;line-height:18px;color:#ccccdc;letter-spacing:0.54px;right:1261.46px;height:12.35px;overflow:hidden;">27</div>
<div class="t" style="top:689.50px;font-size:14px;line-height:21px;color:#ccccdc;-webkit-text-stroke:0.13px #ccccdc;letter-spacing:0.55px;left:639.00px;">Queued Plays by Client</div>
<div class="t" style="top:721.50px;font-size:12px;line-height:18px;color:#ccccdc;letter-spacing:-0.15000000000000002px;right:1203.35px;">100</div>
<div class="t" style="top:747.70px;font-size:12px;line-height:18px;color:#ccccdc;letter-spacing:0.7px;right:1202.50px;">80</div>
<div class="t" style="top:773.80px;font-size:12px;line-height:18px;color:#ccccdc;letter-spacing:0.7px;right:1202.50px;">60</div>
<div class="t" style="top:799.90px;font-size:12px;line-height:18px;color:#ccccdc;letter-spacing:0.7px;right:1202.50px;">40</div>
<div class="t" style="top:825.90px;font-size:12px;line-height:18px;color:#ccccdc;letter-spacing:0.7px;right:1202.50px;">20</div>
<div class="t" style="top:851.80px;font-size:12px;line-height:18px;color:#ccccdc;letter-spacing:0.7px;right:1202.50px;">0</div>
<div class="t" style="top:866.50px;font-size:12px;line-height:18px;color:#ccccdc;letter-spacing:0.85px;left:549.02px;width:400px;text-align:center;">09:40</div>
<div class="t" style="top:866.50px;font-size:12px;line-height:18px;color:#ccccdc;letter-spacing:0.85px;left:732.82px;width:400px;text-align:center;">09:45</div>
<div class="t" style="top:866.50px;font-size:12px;line-height:18px;color:#ccccdc;letter-spacing:0.85px;left:916.83px;width:400px;text-align:center;">09:50</div>
<div class="t" style="top:885.60px;font-size:12px;line-height:18px;color:#6e9fff;-webkit-text-stroke:0.11px #6e9fff;letter-spacing:0.5px;left:668.80px;-webkit-text-stroke:0.28px #6e9fff;">Name</div>
<div class="t" style="top:885.60px;font-size:12px;line-height:18px;color:#6e9fff;-webkit-text-stroke:0.11px #6e9fff;letter-spacing:0.5px;right:645.50px;-webkit-text-stroke:0.28px #6e9fff;">Last</div>
<div class="t" style="top:909.65px;font-size:12px;line-height:18px;color:#ccccdc;letter-spacing:0.54px;left:668.80px;">default</div>
<div class="t" style="top:909.65px;font-size:12px;line-height:18px;color:#ccccdc;letter-spacing:0.54px;right:645.46px;">0</div>
<div class="t" style="top:933.65px;font-size:12px;line-height:18px;color:#ccccdc;letter-spacing:0.54px;left:668.80px;">koito</div>
<div class="t" style="top:933.65px;font-size:12px;line-height:18px;color:#ccccdc;letter-spacing:0.54px;right:645.46px;">0</div>
<div class="t" style="top:956.65px;font-size:12px;line-height:18px;color:#ccccdc;letter-spacing:0.54px;left:668.80px;height:12.35px;overflow:hidden;">lz</div>
<div class="t" style="top:956.65px;font-size:12px;line-height:18px;color:#ccccdc;letter-spacing:0.54px;right:645.46px;height:12.35px;overflow:hidden;">0</div>
<div class="t" style="top:689.50px;font-size:14px;line-height:21px;color:#ccccdc;-webkit-text-stroke:0.13px #ccccdc;letter-spacing:0.55px;left:1255.00px;">Client Issues</div>
<div class="t" style="top:721.50px;font-size:12px;line-height:18px;color:#ccccdc;letter-spacing:-0.15000000000000002px;right:587.35px;">100</div>
<div class="t" style="top:747.70px;font-size:12px;line-height:18px;color:#ccccdc;letter-spacing:0.7px;right:586.50px;">80</div>
<div class="t" style="top:773.80px;font-size:12px;line-height:18px;color:#ccccdc;letter-spacing:0.7px;right:586.50px;">60</div>
<div class="t" style="top:799.90px;font-size:12px;line-height:18px;color:#ccccdc;letter-spacing:0.7px;right:586.50px;">40</div>
<div class="t" style="top:825.90px;font-size:12px;line-height:18px;color:#ccccdc;letter-spacing:0.7px;right:586.50px;">20</div>
<div class="t" style="top:851.80px;font-size:12px;line-height:18px;color:#ccccdc;letter-spacing:0.7px;right:586.50px;">0</div>
<div class="t" style="top:866.50px;font-size:12px;line-height:18px;color:#ccccdc;letter-spacing:0.85px;left:1165.02px;width:400px;text-align:center;">09:40</div>
<div class="t" style="top:866.50px;font-size:12px;line-height:18px;color:#ccccdc;letter-spacing:0.85px;left:1348.83px;width:400px;text-align:center;">09:45</div>
<div class="t" style="top:866.50px;font-size:12px;line-height:18px;color:#ccccdc;letter-spacing:0.85px;left:1532.83px;width:400px;text-align:center;">09:50</div>
<div class="t" style="top:885.60px;font-size:12px;line-height:18px;color:#6e9fff;-webkit-text-stroke:0.11px #6e9fff;letter-spacing:0.5px;left:1284.80px;-webkit-text-stroke:0.28px #6e9fff;">Name</div>
<div class="t" style="top:885.60px;font-size:12px;line-height:18px;color:#6e9fff;-webkit-text-stroke:0.11px #6e9fff;letter-spacing:0.5px;right:29.50px;-webkit-text-stroke:0.28px #6e9fff;">Last</div>
<div class="t" style="top:909.65px;font-size:12px;line-height:18px;color:#ccccdc;letter-spacing:0.54px;left:1284.80px;">default</div>
<div class="t" style="top:909.65px;font-size:12px;line-height:18px;color:#ccccdc;letter-spacing:0.54px;right:29.46px;">0</div>
<div class="t" style="top:933.65px;font-size:12px;line-height:18px;color:#ccccdc;letter-spacing:0.54px;left:1284.80px;">koito</div>
<div class="t" style="top:933.65px;font-size:12px;line-height:18px;color:#ccccdc;letter-spacing:0.54px;right:29.46px;">0</div>
<div class="t" style="top:956.65px;font-size:12px;line-height:18px;color:#ccccdc;letter-spacing:0.54px;left:1284.80px;height:12.35px;overflow:hidden;">lz</div>
<div class="t" style="top:956.65px;font-size:12px;line-height:18px;color:#ccccdc;letter-spacing:0.54px;right:29.46px;height:12.35px;overflow:hidden;">0</div>
<div class="t" style="top:1069.50px;font-size:14px;line-height:21px;color:#ccccdc;-webkit-text-stroke:0.13px #ccccdc;letter-spacing:0.55px;left:23.00px;">Cache Hit Rate</div>
<div class="t" style="top:1101.80px;font-size:12px;line-height:18px;color:#ccccdc;letter-spacing:0.1333333333333333px;right:1808.67px;">100%</div>
<div class="t" style="top:1145.20px;font-size:12px;line-height:18px;color:#ccccdc;letter-spacing:0.7px;right:1808.10px;">80%</div>
<div class="t" style="top:1188.60px;font-size:12px;line-height:18px;color:#ccccdc;letter-spacing:0.7px;right:1808.10px;">60%</div>
<div class="t" style="top:1232.10px;font-size:12px;line-height:18px;color:#ccccdc;letter-spacing:0.7px;right:1808.10px;">40%</div>
<div class="t" style="top:1275.60px;font-size:12px;line-height:18px;color:#ccccdc;letter-spacing:0.7px;right:1808.10px;">20%</div>
<div class="t" style="top:1319.00px;font-size:12px;line-height:18px;color:#ccccdc;letter-spacing:0.7px;right:1808.10px;">0%</div>
<div class="t" style="top:1334.00px;font-size:12px;line-height:18px;color:#ccccdc;letter-spacing:0.85px;left:-65.97px;width:400px;text-align:center;">09:40</div>
<div class="t" style="top:1334.00px;font-size:12px;line-height:18px;color:#ccccdc;letter-spacing:0.85px;left:96.82px;width:400px;text-align:center;">09:45</div>
<div class="t" style="top:1334.00px;font-size:12px;line-height:18px;color:#ccccdc;letter-spacing:0.85px;left:259.93px;width:400px;text-align:center;">09:50</div>
<div class="t" style="top:1105.70px;font-size:12px;line-height:18px;color:#6e9fff;-webkit-text-stroke:0.11px #6e9fff;letter-spacing:0.5px;left:590.80px;-webkit-text-stroke:0.28px #6e9fff;">Name</div>
<div class="t" style="top:1105.70px;font-size:12px;line-height:18px;color:#6e9fff;-webkit-text-stroke:0.11px #6e9fff;letter-spacing:0.5px;right:1017.20px;-webkit-text-stroke:0.28px #6e9fff;">Mean</div>
<div class="t" style="top:1105.70px;font-size:12px;line-height:18px;color:#6e9fff;-webkit-text-stroke:0.11px #6e9fff;letter-spacing:0.5px;right:954.30px;-webkit-text-stroke:0.28px #6e9fff;">Last</div>
<div class="t" style="top:1129.65px;font-size:12px;line-height:18px;color:#ccccdc;letter-spacing:0.54px;left:590.80px;">external<span class="u">_</span>apis (primary)</div>
<div class="t" style="top:1129.65px;font-size:12px;line-height:18px;color:#ccccdc;letter-spacing:0.21500000000000002px;right:1017.49px;">51.4%</div>
<div class="t" style="top:1129.65px;font-size:12px;line-height:18px;color:#ccccdc;letter-spacing:0.21500000000000002px;right:954.58px;">51.4%</div>
<div class="t" style="top:1153.65px;font-size:12px;line-height:18px;color:#ccccdc;letter-spacing:0.54px;left:590.80px;">external<span class="u">_</span>apis (secondary)</div>
<div class="t" style="top:1153.65px;font-size:12px;line-height:18px;color:#ccccdc;letter-spacing:0.54px;right:1017.16px;">0%</div>
<div class="t" style="top:1153.65px;font-size:12px;line-height:18px;color:#ccccdc;letter-spacing:0.54px;right:954.26px;">0%</div>
<div class="t" style="top:1177.65px;font-size:12px;line-height:18px;color:#ccccdc;letter-spacing:0.54px;left:590.80px;">historical<span class="u">_</span>scrobbles (primary)</div>
<div class="t" style="top:1177.65px;font-size:12px;line-height:18px;color:#ccccdc;letter-spacing:0.54px;right:1017.16px;">82.7%</div>
<div class="t" style="top:1177.65px;font-size:12px;line-height:18px;color:#ccccdc;letter-spacing:0.21500000000000002px;right:954.58px;">81.4%</div>
<div class="t" style="top:1200.65px;font-size:12px;line-height:18px;color:#ccccdc;letter-spacing:0.54px;left:590.80px;">historical<span class="u">_</span>scrobbles (secondary)</div>
<div class="t" style="top:1200.65px;font-size:12px;line-height:18px;color:#ccccdc;letter-spacing:0.54px;right:1017.16px;">0%</div>
<div class="t" style="top:1200.65px;font-size:12px;line-height:18px;color:#ccccdc;letter-spacing:0.54px;right:954.26px;">0%</div>
<div class="t" style="top:1224.65px;font-size:12px;line-height:18px;color:#ccccdc;letter-spacing:0.54px;left:590.80px;">metadata (primary)</div>
<div class="t" style="top:1248.65px;font-size:12px;line-height:18px;color:#ccccdc;letter-spacing:0.54px;left:590.80px;">metadata (secondary)</div>
<div class="t" style="top:1248.65px;font-size:12px;line-height:18px;color:#ccccdc;letter-spacing:0.54px;right:1017.16px;">0%</div>
<div class="t" style="top:1248.65px;font-size:12px;line-height:18px;color:#ccccdc;letter-spacing:0.54px;right:954.26px;">0%</div>
<div class="t" style="top:1272.65px;font-size:12px;line-height:18px;color:#ccccdc;letter-spacing:0.54px;left:590.80px;">queued<span class="u">_</span>scrobbles (primary)</div>
<div class="t" style="top:1272.65px;font-size:12px;line-height:18px;color:#ccccdc;letter-spacing:0.21500000000000002px;right:1017.49px;">91.7%</div>
<div class="t" style="top:1272.65px;font-size:12px;line-height:18px;color:#ccccdc;letter-spacing:0.21500000000000002px;right:954.58px;">91.7%</div>
<div class="t" style="top:1296.65px;font-size:12px;line-height:18px;color:#ccccdc;letter-spacing:0.54px;left:590.80px;">transformer (primary)</div>
<div class="t" style="top:1296.65px;font-size:12px;line-height:18px;color:#ccccdc;letter-spacing:0.54px;right:1017.16px;">0%</div>
<div class="t" style="top:1296.65px;font-size:12px;line-height:18px;color:#ccccdc;letter-spacing:0.54px;right:954.26px;">0%</div>
<div class="t" style="top:1320.65px;font-size:12px;line-height:18px;color:#ccccdc;letter-spacing:0.54px;left:590.80px;">transformer (secondary)</div>
<div class="t" style="top:1320.65px;font-size:12px;line-height:18px;color:#ccccdc;letter-spacing:0.54px;right:1017.16px;">0%</div>
<div class="t" style="top:1320.65px;font-size:12px;line-height:18px;color:#ccccdc;letter-spacing:0.54px;right:954.26px;">0%</div>
<div class="t" style="top:1069.50px;font-size:14px;line-height:21px;color:#ccccdc;-webkit-text-stroke:0.13px #ccccdc;letter-spacing:0.55px;left:947.00px;">Cache Entry Count</div>
<div class="t" style="top:1152.10px;font-size:12px;line-height:18px;color:#ccccdc;letter-spacing:0.7px;right:892.70px;">600</div>
<div class="t" style="top:1207.80px;font-size:12px;line-height:18px;color:#ccccdc;letter-spacing:0.7px;right:892.70px;">400</div>
<div class="t" style="top:1263.20px;font-size:12px;line-height:18px;color:#ccccdc;letter-spacing:0.7px;right:892.70px;">200</div>
<div class="t" style="top:1318.70px;font-size:12px;line-height:18px;color:#ccccdc;letter-spacing:0.7px;right:892.70px;">0</div>
<div class="t" style="top:1333.50px;font-size:12px;line-height:18px;color:#ccccdc;letter-spacing:0.85px;left:870.92px;width:400px;text-align:center;">09:40</div>
<div class="t" style="top:1333.50px;font-size:12px;line-height:18px;color:#ccccdc;letter-spacing:0.85px;left:1084.92px;width:400px;text-align:center;">09:45</div>
<div class="t" style="top:1333.50px;font-size:12px;line-height:18px;color:#ccccdc;letter-spacing:0.85px;left:1298.92px;width:400px;text-align:center;">09:50</div>
<div class="t" style="top:1105.70px;font-size:12px;line-height:18px;color:#6e9fff;-webkit-text-stroke:0.11px #6e9fff;letter-spacing:0.5px;left:1659.10px;-webkit-text-stroke:0.28px #6e9fff;">Name</div>
<div class="t" style="top:1105.70px;font-size:12px;line-height:18px;color:#6e9fff;-webkit-text-stroke:0.11px #6e9fff;letter-spacing:0.5px;right:29.50px;-webkit-text-stroke:0.28px #6e9fff;">Last</div>
<div class="t" style="top:1129.65px;font-size:12px;line-height:18px;color:#ccccdc;letter-spacing:0.54px;left:1659.10px;">external<span class="u">_</span>apis</div>
<div class="t" style="top:1129.65px;font-size:12px;line-height:18px;color:#ccccdc;letter-spacing:0.54px;right:29.46px;">3</div>
<div class="t" style="top:1153.65px;font-size:12px;line-height:18px;color:#ccccdc;letter-spacing:0.54px;left:1659.10px;">historical<span class="u">_</span>scrobbles</div>
<div class="t" style="top:1153.65px;font-size:12px;line-height:18px;color:#ccccdc;letter-spacing:0.54px;right:29.46px;">6</div>
<div class="t" style="top:1177.65px;font-size:12px;line-height:18px;color:#ccccdc;letter-spacing:0.54px;left:1659.10px;">metadata</div>
<div class="t" style="top:1177.65px;font-size:12px;line-height:18px;color:#ccccdc;letter-spacing:0.54px;right:29.46px;">0</div>
<div class="t" style="top:1200.65px;font-size:12px;line-height:18px;color:#ccccdc;letter-spacing:0.54px;left:1659.10px;">queued<span class="u">_</span>scrobbles</div>
<div class="t" style="top:1200.65px;font-size:12px;line-height:18px;color:#ccccdc;letter-spacing:0.54px;right:29.46px;">704</div>
<div class="t" style="top:1224.65px;font-size:12px;line-height:18px;color:#ccccdc;letter-spacing:0.54px;left:1659.10px;">transformer</div>
<div class="t" style="top:1224.65px;font-size:12px;line-height:18px;color:#ccccdc;letter-spacing:-0.55px;right:30.55px;">1</div>
<div class="t" style="top:1373.50px;font-size:14px;line-height:21px;color:#ccccdc;-webkit-text-stroke:0.13px #ccccdc;letter-spacing:0.55px;left:947.00px;">Cache Hits vs Misses</div>
<div class="t" style="top:1419.60px;font-size:12px;line-height:18px;color:#ccccdc;letter-spacing:0.7px;right:892.70px;">300</div>
<div class="t" style="top:1453.40px;font-size:12px;line-height:18px;color:#ccccdc;letter-spacing:0.7px;right:892.70px;">250</div>
<div class="t" style="top:1487.20px;font-size:12px;line-height:18px;color:#ccccdc;letter-spacing:0.7px;right:892.70px;">200</div>
<div class="t" style="top:1521.00px;font-size:12px;line-height:18px;color:#ccccdc;letter-spacing:-0.15000000000000002px;right:893.55px;">150</div>
<div class="t" style="top:1554.80px;font-size:12px;line-height:18px;color:#ccccdc;letter-spacing:-0.15000000000000002px;right:893.55px;">100</div>
<div class="t" style="top:1588.60px;font-size:12px;line-height:18px;color:#ccccdc;letter-spacing:0.7px;right:892.70px;">50</div>
<div class="t" style="top:1622.40px;font-size:12px;line-height:18px;color:#ccccdc;letter-spacing:0.7px;right:892.70px;">0</div>
<div class="t" style="top:1638.20px;font-size:12px;line-height:18px;color:#ccccdc;letter-spacing:0.85px;left:855.02px;width:400px;text-align:center;">09:40</div>
<div class="t" style="top:1638.20px;font-size:12px;line-height:18px;color:#ccccdc;letter-spacing:0.85px;left:1028.92px;width:400px;text-align:center;">09:45</div>
<div class="t" style="top:1638.20px;font-size:12px;line-height:18px;color:#ccccdc;letter-spacing:0.85px;left:1203.83px;width:400px;text-align:center;">09:50</div>
<div class="t" style="top:1409.60px;font-size:12px;line-height:18px;color:#6e9fff;-webkit-text-stroke:0.11px #6e9fff;letter-spacing:0.5px;left:1541.90px;-webkit-text-stroke:0.28px #6e9fff;">Name</div>
<div class="t" style="top:1409.60px;font-size:12px;line-height:18px;color:#6e9fff;-webkit-text-stroke:0.11px #6e9fff;letter-spacing:0.5px;right:29.50px;-webkit-text-stroke:0.28px #6e9fff;">Last</div>
<div class="t" style="top:1433.65px;font-size:12px;line-height:18px;color:#ccccdc;letter-spacing:0.54px;left:1541.90px;">external<span class="u">_</span>apis hits (primary)</div>
<div class="t" style="top:1433.65px;font-size:12px;line-height:18px;color:#ccccdc;letter-spacing:-0.55px;right:30.55px;">110</div>
<div class="t" style="top:1457.65px;font-size:12px;line-height:18px;color:#ccccdc;letter-spacing:0.54px;left:1541.90px;">external<span class="u">_</span>apis hits (secondary)</div>
<div class="t" style="top:1457.65px;font-size:12px;line-height:18px;color:#ccccdc;letter-spacing:0.54px;right:29.46px;">0</div>
<div class="t" style="top:1481.65px;font-size:12px;line-height:18px;color:#ccccdc;letter-spacing:0.54px;left:1541.90px;">historical<span class="u">_</span>scrobbles hits (primary)</div>
<div class="t" style="top:1481.65px;font-size:12px;line-height:18px;color:#ccccdc;letter-spacing:0.54px;right:29.46px;">288</div>
<div class="t" style="top:1504.65px;font-size:12px;line-height:18px;color:#ccccdc;letter-spacing:0.54px;left:1541.90px;">historical<span class="u">_</span>scrobbles hits (secondary)</div>
<div class="t" style="top:1504.65px;font-size:12px;line-height:18px;color:#ccccdc;letter-spacing:0.54px;right:29.46px;">0</div>
<div class="t" style="top:1528.65px;font-size:12px;line-height:18px;color:#ccccdc;letter-spacing:0.54px;left:1541.90px;">metadata hits (primary)</div>
<div class="t" style="top:1528.65px;font-size:12px;line-height:18px;color:#ccccdc;letter-spacing:0.54px;right:29.46px;">0</div>
<div class="t" style="top:1552.65px;font-size:12px;line-height:18px;color:#ccccdc;letter-spacing:0.54px;left:1541.90px;">metadata hits (secondary)</div>
<div class="t" style="top:1552.65px;font-size:12px;line-height:18px;color:#ccccdc;letter-spacing:0.54px;right:29.46px;">0</div>
<div class="t" style="top:1576.65px;font-size:12px;line-height:18px;color:#ccccdc;letter-spacing:0.54px;left:1541.90px;">queued<span class="u">_</span>scrobbles hits (primary)</div>
<div class="t" style="top:1576.65px;font-size:12px;line-height:18px;color:#ccccdc;letter-spacing:-0.55px;right:30.55px;">11</div>
<div class="t" style="top:1600.65px;font-size:12px;line-height:18px;color:#ccccdc;letter-spacing:0.54px;left:1541.90px;">transformer hits (primary)</div>
<div class="t" style="top:1600.65px;font-size:12px;line-height:18px;color:#ccccdc;letter-spacing:0.54px;right:29.46px;">0</div>
<div class="t" style="top:1624.65px;font-size:12px;line-height:18px;color:#ccccdc;letter-spacing:0.54px;left:1541.90px;">transformer hits (secondary)</div>
<div class="t" style="top:1624.65px;font-size:12px;line-height:18px;color:#ccccdc;letter-spacing:0.54px;right:29.46px;">0</div>
<div class="t" style="top:1648.65px;font-size:12px;line-height:18px;color:#ccccdc;letter-spacing:0.54px;left:1541.90px;height:5.35px;overflow:hidden;">external<span class="u">_</span>apis misses (primary)</div>
<div class="t" style="top:1648.65px;font-size:12px;line-height:18px;color:#ccccdc;letter-spacing:-0.10999999999999999px;right:30.11px;height:5.35px;overflow:hidden;">104</div>
</div>
</body></html>
